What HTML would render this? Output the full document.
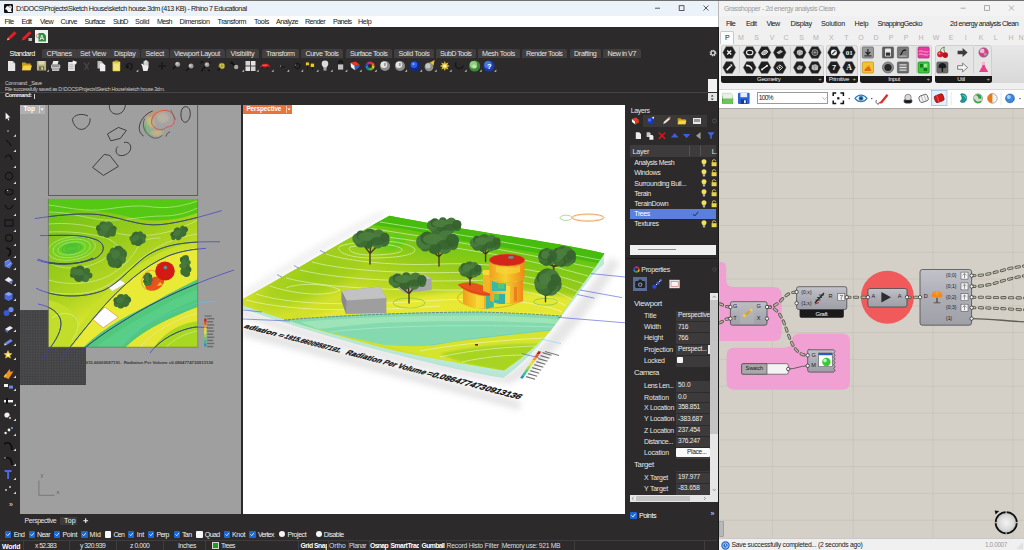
<!DOCTYPE html>
<html><head><meta charset="utf-8"><title>Rhino + Grasshopper</title>
<style>
*{box-sizing:border-box;margin:0;padding:0}
html,body{width:1024px;height:550px;overflow:hidden;background:#2c2a2a;font-family:"Liberation Sans",sans-serif;font-size:7px;color:#e8e8e8}
.abs{position:absolute}
#root{position:relative;width:1024px;height:550px;overflow:hidden}
.t{position:absolute;white-space:pre;line-height:1}
svg{position:absolute;overflow:visible}

#rh{left:0;top:0;width:718px;height:550px;background:#2c2a2a}
.tab{position:absolute;top:49px;height:9px;background:#403e3e;border-radius:2px 2px 0 0}


</style></head><body><div id="root">
<!-- sec_rhtop -->
<div id="rh" class="abs">
<div class="abs" style="left:0px;top:0px;width:718px;height:16px;background:#ebf2f9;"></div>
<svg style="left:4px;top:3.5px" width="9" height="9" viewBox="0 0 9 9"><rect width="9" height="9" rx="1" fill="#111"/><path d="M1 5 L3 2 L5 2.5 L6 1 L8 3 L7 6 L8 8 L4 8 L3 6 Z" fill="#f4f4f4"/><circle cx="6" cy="3" r=".6" fill="#111"/></svg>
<div class="t" style="left:16px;top:4.60px;font-size:7.2px;color:#151515;font-weight:400;letter-spacing:-0.461px;">D:\DOCS\Projects\Sketch House\sketch house.3dm (413 KB) - Rhino 7 Educational</div>
<svg style="left:650px;top:0" width="66" height="16" viewBox="0 0 66 16" fill="none" stroke="#333" stroke-width=".8"><path d="M5 8.2h5"/><rect x="29.2" y="5.7" width="4.8" height="4.8"/><path d="M53.5 5.5l5 5m0-5l-5 5"/></svg>
<div class="abs" style="left:0px;top:16px;width:718px;height:11px;background:#ffffff;"></div>
<div class="t" style="left:4.5px;top:18.00px;font-size:7.2px;color:#151515;font-weight:400;letter-spacing:-0.576px;">File</div>
<div class="t" style="left:21.5px;top:18.00px;font-size:7.2px;color:#151515;font-weight:400;letter-spacing:-0.602px;">Edit</div>
<div class="t" style="left:40px;top:18.00px;font-size:7.2px;color:#151515;font-weight:400;letter-spacing:-0.619px;">View</div>
<div class="t" style="left:60.5px;top:18.00px;font-size:7.2px;color:#151515;font-weight:400;letter-spacing:-0.541px;">Curve</div>
<div class="t" style="left:84.5px;top:18.00px;font-size:7.2px;color:#151515;font-weight:400;letter-spacing:-0.616px;">Surface</div>
<div class="t" style="left:113px;top:18.00px;font-size:7.2px;color:#151515;font-weight:400;letter-spacing:-0.878px;">SubD</div>
<div class="t" style="left:135px;top:18.00px;font-size:7.2px;color:#151515;font-weight:400;letter-spacing:-0.402px;">Solid</div>
<div class="t" style="left:157px;top:18.00px;font-size:7.2px;color:#151515;font-weight:400;letter-spacing:-0.652px;">Mesh</div>
<div class="t" style="left:179.5px;top:18.00px;font-size:7.2px;color:#151515;font-weight:400;letter-spacing:-0.446px;">Dimension</div>
<div class="t" style="left:217.5px;top:18.00px;font-size:7.2px;color:#151515;font-weight:400;letter-spacing:-0.449px;">Transform</div>
<div class="t" style="left:254px;top:18.00px;font-size:7.2px;color:#151515;font-weight:400;letter-spacing:-0.362px;">Tools</div>
<div class="t" style="left:276px;top:18.00px;font-size:7.2px;color:#151515;font-weight:400;letter-spacing:-0.517px;">Analyze</div>
<div class="t" style="left:305px;top:18.00px;font-size:7.2px;color:#151515;font-weight:400;letter-spacing:-0.603px;">Render</div>
<div class="t" style="left:333px;top:18.00px;font-size:7.2px;color:#151515;font-weight:400;letter-spacing:-0.586px;">Panels</div>
<div class="t" style="left:358px;top:18.00px;font-size:7.2px;color:#151515;font-weight:400;letter-spacing:-0.327px;">Help</div>
<svg style="left:0;top:27px" width="60" height="20" viewBox="0 27 60 20">
<path d="M6.600 40.600 L7.600 37.800 L14.400 31.200 L16.600 33.200 L9.800 39.800 Z" fill="#e02028"/><path d="M7 40.3l1-2.3 1.4 1.3z" fill="#f0d0a0"/>
<path d="M21.600 40.600 L22.600 37.800 L29.400 31.200 L31.600 33.200 L24.800 39.800 Z" fill="#e02028"/><rect x="28.5" y="38" width="3.5" height="3" fill="#b8b8b8"/>
<rect x="35" y="30" width="13" height="13" fill="#eef3ee"/><path d="M38.5 33 h5 l2.5 2.5 v6 h-7.5z" fill="#2f8f3f"/><path d="M40 40l1.8-5 1.8 5m-3-1.6h2.4" stroke="#fff" stroke-width=".8" fill="none"/><circle cx="38" cy="36" r="1.8" fill="none" stroke="#c06070" stroke-width=".6"/>
</svg>
<div class="t" style="left:9.6px;top:50.00px;font-size:7.2px;color:#ffffff;font-weight:400;letter-spacing:-0.503px;">Standard</div>
<div class="tab" style="left:42.0px;width:34.5px"></div>
<div class="t" style="left:46.5px;top:50.00px;font-size:7.2px;color:#e2e2e2;font-weight:400;letter-spacing:-0.245px;">CPlanes</div>
<div class="tab" style="left:75.5px;width:35px"></div>
<div class="t" style="left:80px;top:50.00px;font-size:7.2px;color:#e2e2e2;font-weight:400;letter-spacing:-0.286px;">Set View</div>
<div class="tab" style="left:109.5px;width:30.5px"></div>
<div class="t" style="left:114px;top:50.00px;font-size:7.2px;color:#e2e2e2;font-weight:400;letter-spacing:-0.301px;">Display</div>
<div class="tab" style="left:141.0px;width:27.5px"></div>
<div class="t" style="left:145.5px;top:50.00px;font-size:7.2px;color:#e2e2e2;font-weight:400;letter-spacing:-0.252px;">Select</div>
<div class="tab" style="left:169.5px;width:55px"></div>
<div class="t" style="left:174px;top:50.00px;font-size:7.2px;color:#e2e2e2;font-weight:400;letter-spacing:-0.367px;">Viewport Layout</div>
<div class="tab" style="left:226.0px;width:33px"></div>
<div class="t" style="left:230.5px;top:50.00px;font-size:7.2px;color:#e2e2e2;font-weight:400;letter-spacing:-0.188px;">Visibility</div>
<div class="tab" style="left:261.5px;width:37.5px"></div>
<div class="t" style="left:266px;top:50.00px;font-size:7.2px;color:#e2e2e2;font-weight:400;letter-spacing:-0.449px;">Transform</div>
<div class="tab" style="left:301.0px;width:42px"></div>
<div class="t" style="left:305.5px;top:50.00px;font-size:7.2px;color:#e2e2e2;font-weight:400;letter-spacing:-0.444px;">Curve Tools</div>
<div class="tab" style="left:345.5px;width:46.5px"></div>
<div class="t" style="left:350px;top:50.00px;font-size:7.2px;color:#e2e2e2;font-weight:400;letter-spacing:-0.461px;">Surface Tools</div>
<div class="tab" style="left:394.0px;width:40px"></div>
<div class="t" style="left:398.5px;top:50.00px;font-size:7.2px;color:#e2e2e2;font-weight:400;letter-spacing:-0.335px;">Solid Tools</div>
<div class="tab" style="left:435.5px;width:40.5px"></div>
<div class="t" style="left:440px;top:50.00px;font-size:7.2px;color:#e2e2e2;font-weight:400;letter-spacing:-0.519px;">SubD Tools</div>
<div class="tab" style="left:477.5px;width:42px"></div>
<div class="t" style="left:482px;top:50.00px;font-size:7.2px;color:#e2e2e2;font-weight:400;letter-spacing:-0.329px;">Mesh Tools</div>
<div class="tab" style="left:521.5px;width:45.5px"></div>
<div class="t" style="left:526px;top:50.00px;font-size:7.2px;color:#e2e2e2;font-weight:400;letter-spacing:-0.483px;">Render Tools</div>
<div class="tab" style="left:569.5px;width:31.5px"></div>
<div class="t" style="left:574px;top:50.00px;font-size:7.2px;color:#e2e2e2;font-weight:400;letter-spacing:-0.339px;">Drafting</div>
<div class="tab" style="left:603.0px;width:37.5px"></div>
<div class="t" style="left:607.5px;top:50.00px;font-size:7.2px;color:#e2e2e2;font-weight:400;letter-spacing:-0.480px;">New in V7</div>
<svg style="left:709px;top:49px" width="8" height="8" viewBox="-4 -4 8 8"><circle r="2.6" fill="none" stroke="#d8d8d8" stroke-width="1.6" stroke-dasharray="1.1 0.95"/><circle r="2" fill="none" stroke="#d8d8d8" stroke-width="1.2"/></svg>
<svg style="left:0;top:0" width="717" height="80" viewBox="0 0 717 80"><g transform="translate(11.6,66)"><path d="M-3.6 -5 h4.6 l2.6 2.6 v7.4 h-7.2z" fill="#e6e6e6"/><path d="M1 -5 v2.6 h2.6z" fill="#bdbdbd"/></g><g transform="translate(26.6,66)"><path d="M-4.6 -3.6 h3.4 l1 1.2 h4.4 v6.6 h-8.8z" fill="#c89a18"/><path d="M-4.6 4.2 l1.6 -4.6 h8.4 l-1.6 4.6z" fill="#f4d44a"/></g><g transform="translate(41.5,66)"><rect x="-4.6" y="-5" width="9.2" height="9.6" rx=".6" fill="#b6b27a"/><rect x="-3" y="-5" width="6" height="3.6" fill="#d9d6b4"/><rect x="-2.6" y=".4" width="5.2" height="4.2" fill="#6d6a50"/><rect x="-.2" y="1.2" width="1.6" height="2.6" fill="#d9d6b4"/></g><path d="M46.7 5.8 l2.2 0 l0 -2.2z" fill="#c8c8c8" transform="translate(0,66)"/><g transform="translate(55.6,66)"><path d="M-2.4 -5 h5.4 l-1 3.4 h-5.4z" fill="#ececec"/><rect x="-4.6" y="-1.6" width="9.2" height="4.2" rx=".8" fill="#c9c9c9"/><rect x="-3.8" y="-.4" width="7.6" height=".9" fill="#555"/><rect x="-3.6" y="2.6" width="7.2" height="2.2" fill="#ededed"/><rect x="-3.6" y="3.5" width="7.2" height=".6" fill="#777"/></g><g transform="translate(72.3,66)"><path d="M-4.2 -4 h5 l1.8 1.8 v7.2 h-6.8z" fill="#e0e0e0"/><path d="M.6 -5.4 l4 1.2 -1 2.6 -3.6-1.4z" fill="#f4f4f4"/><path d="M-2.8 -1.2h3.6 M-2.8 .6h3.6 M-2.8 2.4h3.6" stroke="#9a9a9a" stroke-width=".6"/></g><g transform="translate(86.6,66)"><path d="M-2.6 -3.6 L2 3.6 M2.6 -3.6 L-2 3.6" stroke="#474549" stroke-width="1.3" fill="none"/></g><g transform="translate(101.3,66)"><path d="M-3.8 -5 h3.6 l1.8 1.8 v5.6 h-5.4z" fill="#bfbfbf"/><path d="M-1.4 -2.4 h3.6 l1.8 1.8 v5.8 h-5.4z" fill="#efefef"/></g><g transform="translate(116.4,66)"><rect x="-3.8" y="-4.4" width="7.6" height="9.6" rx=".7" fill="#e9d65a"/><rect x="-1.8" y="-5.4" width="3.6" height="2" rx=".5" fill="#caa820"/><rect x="-2.8" y="-2.2" width="5.6" height="6.4" fill="#f3e57c"/></g><g transform="translate(129.5,66)"><path d="M-3 1.4 a3 3 0 1 1 3 2" stroke="#19181a" stroke-width="1.6" fill="none"/><circle cx="-2" cy="1" r="1.4" fill="#121113"/></g><path d="M136.1 5.8 l2.2 0 l0 -2.2z" fill="#c8c8c8" transform="translate(0,66)"/><g transform="translate(145.8,66)"><path d="M-3.6 .2 l-1.1 -2.2 1-.6 1.5 1.7 v-3.9 h1.2 v-1 h1.3 v.4 h1.2 v.8 h1.2 v6.1 l-1.1 3.6 h-4.1z" fill="#ededed"/><path d="M-1 -3.6v3 M.4 -4.4v3.6 M1.8 -3.8v3.2" stroke="#8a8a8a" stroke-width=".45"/></g><g transform="translate(162,66)"><path d="M-4 0h8M0 -4v8" stroke="#1a191b" stroke-width="1.5"/></g><g transform="translate(176.6,66)"><circle cx="1" cy="-1.8" r="2.5" fill="#9d9d9d"/><circle cx="0.4" cy="-2.4000000000000004" r="1.25" fill="#c9c9c9"/><path d="M-0.8 0.0 l-3 3" stroke="#151416" stroke-width="1.5"/></g><g transform="translate(189.6,66)"><circle cx="1.4" cy="0" r="2.5" fill="#9d9d9d"/><circle cx="0.8" cy="-0.6000000000000001" r="1.25" fill="#c9c9c9"/><path d="M-0.4 1.8 l-3 3" stroke="#151416" stroke-width="1.5"/></g><g transform="translate(205.4,66)"><circle cx="1.6" cy="-1.3" r="2.4" fill="#9d9d9d"/><circle cx="1.0" cy="-1.9000000000000001" r="1.2" fill="#c9c9c9"/><path d="M-0.20000000000000007 0.5 l-3 3" stroke="#151416" stroke-width="1.5"/><path d="M-4.2 -4.4 l2 .2 M-4.2 -4.4 l.2 2 M-4.4 4.6 l2-.2 M4.6 -4.6 l-.2 1.8 M4.6 4.6l-2-.2" stroke="#121113" stroke-width="1.1"/></g><g transform="translate(221.8,66)"><circle r="3" fill="#d8cf4a"/><path d="M-3 0h6M0 -3v6" stroke="#8a8430" stroke-width=".7"/><circle r="3" fill="none" stroke="#6f6a2a" stroke-width=".5"/><path d="M-1.6 1.8 l-2.6 2.6" stroke="#151416" stroke-width="1.4"/></g><g transform="translate(235,66)"><circle cx="1.2" cy="1" r="2.2" fill="#a8a8a8"/><path d="M-3.6 -3.4 l3 2.6" stroke="#121113" stroke-width="1.6"/><circle cx="-3.4" cy="-3.2" r="1.3" fill="#121113"/></g><path d="M241.9 5.8 l2.2 0 l0 -2.2z" fill="#c8c8c8" transform="translate(0,66)"/><g transform="translate(250.5,66)"><rect x="-5" y="-5" width="4.6" height="4.6" fill="#d4d4d4"/><rect x=".4" y="-5" width="4.6" height="4.6" fill="#e2e2e2"/><rect x="-5" y=".4" width="4.6" height="4.6" fill="#e2e2e2"/><rect x=".4" y=".4" width="4.6" height="4.6" fill="#d4d4d4"/></g><path d="M256.5 5.8 l2.2 0 l0 -2.2z" fill="#c8c8c8" transform="translate(0,66)"/><g transform="translate(265,66)"><path d="M-5 1 l1.6-1.8 2-1.4 h4 l2 1.4 v2.2 h-9.6z" fill="#d8181c"/><path d="M-2.6 -1.2 h4.6 l.8 .8 h-6z" fill="#ff8c8c"/><circle cx="-2.6" cy="1.6" r="1" fill="#222"/><circle cx="2.6" cy="1.6" r="1" fill="#222"/></g><path d="M271.5 5.8 l2.2 0 l0 -2.2z" fill="#c8c8c8" transform="translate(0,66)"/><g transform="translate(283,66)"><circle cx="-2.4" cy="0" r=".6" fill="#bdbdbd"/><path d="M-2 1 l4 0" stroke="#1a191b" stroke-width="1.2"/></g><path d="M287.0 5.8 l2.2 0 l0 -2.2z" fill="#c8c8c8" transform="translate(0,66)"/><g transform="translate(297.5,66)"><circle r="2.6" fill="none" stroke="#19181a" stroke-width="1.3"/><circle cx="-2.2" cy="-1" r=".55" fill="#c8c8c8"/></g><path d="M301.0 5.8 l2.2 0 l0 -2.2z" fill="#c8c8c8" transform="translate(0,66)"/><g transform="translate(310.5,66)"><rect x="-4.6" y="-3.6" width="3" height="3" fill="#f0c91a"/><rect x=".2" y="-2.4" width="3.4" height="3.4" fill="#f0c91a"/><path d="M-3 -0.4 v4 M2 1v3" stroke="#19181a" stroke-width=".9"/></g><path d="M316.3 5.8 l2.2 0 l0 -2.2z" fill="#c8c8c8" transform="translate(0,66)"/><g transform="translate(325,66)"><path d="M0 -5.4 a3.3 3.3 0 0 1 3.3 3.3 c0 1.6 -1.4 2.2 -1.6 3.8 h-3.4 c-.2 -1.6 -1.6 -2.2 -1.6 -3.8 a3.3 3.3 0 0 1 3.3 -3.3z" fill="#dcdcdc"/><rect x="-1.5" y="2" width="3" height="2.6" fill="#a5a5a5"/></g><path d="M330.5 5.8 l2.2 0 l0 -2.2z" fill="#c8c8c8" transform="translate(0,66)"/><g transform="translate(340.6,66)"><path d="M-1.8 -1.6 v-1.6 a1.8 1.8 0 0 1 3.6 0 v1.6" fill="none" stroke="#121113" stroke-width="1.3"/><rect x="-2.6" y="-1.6" width="5.2" height="5.2" fill="#c2c2c2"/></g><path d="M345.1 5.8 l2.2 0 l0 -2.2z" fill="#c8c8c8" transform="translate(0,66)"/><g transform="translate(355,66)"><path d="M-4.4 -3.2 l5-1.4 4 3 -5 1.8z" fill="#e83a1e"/><path d="M-4.4 -3.2 l.4 4.4 4 3 -.4-4.2z" fill="#f4f4f4"/><path d="M-.4 .2 l5-1.8 -.2 2.6 -4.4 3.4z" fill="#2a62c8"/></g><path d="M359.5 5.8 l2.2 0 l0 -2.2z" fill="#c8c8c8" transform="translate(0,66)"/><g transform="translate(370,66)"><path d="M0 0 L4.60 0.00 A4.6 4.6 0 0 1 3.25 3.25Z" fill="#e8c020"/><path d="M0 0 L3.25 3.25 A4.6 4.6 0 0 1 -0.00 4.60Z" fill="#58b030"/><path d="M0 0 L-0.00 4.60 A4.6 4.6 0 0 1 -3.25 3.25Z" fill="#20a070"/><path d="M0 0 L-3.25 3.25 A4.6 4.6 0 0 1 -4.60 -0.00Z" fill="#2080c0"/><path d="M0 0 L-4.60 -0.00 A4.6 4.6 0 0 1 -3.25 -3.25Z" fill="#5040b0"/><path d="M0 0 L-3.25 -3.25 A4.6 4.6 0 0 1 0.00 -4.60Z" fill="#b030a0"/><path d="M0 0 L0.00 -4.60 A4.6 4.6 0 0 1 3.25 -3.25Z" fill="#e03030"/><path d="M0 0 L3.25 -3.25 A4.6 4.6 0 0 1 4.60 0.00Z" fill="#f07020"/><circle r="2" fill="#2c2a2a"/></g><path d="M374.5 5.8 l2.2 0 l0 -2.2z" fill="#c8c8c8" transform="translate(0,66)"/><g transform="translate(385,66)"><circle r="5" fill="#8d8d8d"/><circle cx="-1.1" cy="-1.3" r="3.30" fill="#e4e4e4"/><rect x="-.5" y="-3" width=".9" height="3" fill="#555"/></g><g transform="translate(400,66)"><circle r="5" fill="#8d8d8d"/><circle cx="-1.1" cy="-1.3" r="3.30" fill="#e4e4e4"/><rect x="-.5" y="-3" width=".9" height="3" fill="#555"/></g><path d="M404.9 5.8 l2.2 0 l0 -2.2z" fill="#c8c8c8" transform="translate(0,66)"/><g transform="translate(415,66)"><circle r="5" fill="#0c2a9a"/><circle cx="-1.1" cy="-1.3" r="3.30" fill="#2e5fe0"/><circle cx="-1.6" cy="-2" r=".9" fill="#a8c4ff"/></g><path d="M419.9 5.8 l2.2 0 l0 -2.2z" fill="#c8c8c8" transform="translate(0,66)"/><g transform="translate(429.6,66)"><circle cx="-.6" cy=".8" r="4.4" fill="#8f8f8f"/><circle cx="-1.6" cy="-.2" r="2.6" fill="#c4c4c4"/><path d="M.4 -3.6 l4.6 -2.4 -1 5.4z" fill="#f0c030"/></g><path d="M434.5 5.8 l2.2 0 l0 -2.2z" fill="#c8c8c8" transform="translate(0,66)"/><g transform="translate(444.8,66)"><path d="M0 -5 l1 2.4 h-2z" fill="#e8c83a" transform="rotate(0)"/><path d="M0 -5 l1 2.4 h-2z" fill="#e8c83a" transform="rotate(45)"/><path d="M0 -5 l1 2.4 h-2z" fill="#e8c83a" transform="rotate(90)"/><path d="M0 -5 l1 2.4 h-2z" fill="#e8c83a" transform="rotate(135)"/><path d="M0 -5 l1 2.4 h-2z" fill="#e8c83a" transform="rotate(180)"/><path d="M0 -5 l1 2.4 h-2z" fill="#e8c83a" transform="rotate(225)"/><path d="M0 -5 l1 2.4 h-2z" fill="#e8c83a" transform="rotate(270)"/><path d="M0 -5 l1 2.4 h-2z" fill="#e8c83a" transform="rotate(315)"/><circle r="2.8" fill="#e8c83a"/><circle r="1.5" fill="#fff6c0"/></g><path d="M449.5 5.8 l2.2 0 l0 -2.2z" fill="#c8c8c8" transform="translate(0,66)"/><g transform="translate(459.6,66)"><path d="M-4 -3.6 v3 a3 3 0 0 0 3 3 h1.4 a3 3 0 0 0 3 -3" fill="none" stroke="#19181c" stroke-width="1.5"/></g><path d="M464.5 5.8 l2.2 0 l0 -2.2z" fill="#c8c8c8" transform="translate(0,66)"/><g transform="translate(474.6,66)"><circle r="5.6" fill="#3f8a3a"/><circle cx="-1.1" cy="-1.3" r="3.70" fill="#8fce7a"/><path d="M-2.6 -.4 l2.4 -1.6 .6 1.6 2.2 .4 -1.6 2.4 -2.6 -.4z" fill="#d8f0c8" opacity=".7"/></g><path d="M479.5 5.8 l2.2 0 l0 -2.2z" fill="#c8c8c8" transform="translate(0,66)"/><g transform="translate(489,66)"><circle r="5.6" fill="#1a3aa8"/><circle cx="-1.1" cy="-1.3" r="3.70" fill="#4a74e6"/><text x="-1.9" y="2.6" font-size="7.6" font-weight="700" fill="#fff" font-family="Liberation Sans,sans-serif">?</text></g><path d="M494.1 5.8 l2.2 0 l0 -2.2z" fill="#c8c8c8" transform="translate(0,66)"/></svg>
<div class="t" style="left:5px;top:80.80px;font-size:5.2px;color:#cccccc;font-weight:400;letter-spacing:-0.344px;">Command: _Save</div>
<div class="t" style="left:5px;top:86.90px;font-size:5.2px;color:#cccccc;font-weight:400;letter-spacing:-0.302px;">File successfully saved as D:\DOCS\Projects\Sketch House\sketch house.3dm.</div>
<div class="abs" style="left:0px;top:92.3px;width:708px;height:0.7px;background:#454343;"></div>
<div class="t" style="left:5px;top:93.40px;font-size:5.8px;color:#f0f0f0;font-weight:700;letter-spacing:-0.474px;">Command:</div>
<div class="abs" style="left:33.6px;top:93.8px;width:0.6px;height:5.4px;background:#cfcfcf;"></div>
<div class="abs" style="left:708.2px;top:79px;width:9.3px;height:12.6px;background:#f2f2f2;"></div>
<div class="abs" style="left:708.2px;top:92.8px;width:9.3px;height:8px;background:#e4e4e4;"></div>
<svg style="left:708px;top:92.5px" width="8.5" height="9" viewBox="0 0 8.5 9"><path d="M2.8 3.6 L4.2 1.8 L5.6 3.6Z M2.8 5.4 L4.2 7.2 L5.6 5.4Z" fill="#333"/></svg>
</div>
<!-- sec_rhviews -->
<div class="abs" style="left:19.8px;top:104.5px;width:221px;height:409.5px;background:#9f9f9f;"></div>
<div class="abs" style="left:19.8px;top:310.4px;width:65.8px;height:74.4px;background-color:#3b3b3d;background-image:linear-gradient(#4a4a4c .4px,transparent .4px),linear-gradient(90deg,#4a4a4c .4px,transparent .4px);background-size:1.6px 1.6px"></div>
<div class="abs" style="left:19.8px;top:104.5px;width:25.4px;height:9.6px;background:#b0b0b0;"></div>
<div class="t" style="left:23.6px;top:106.10px;font-size:6.6px;color:#ffffff;font-weight:700;letter-spacing:-0.035px;">Top</div>
<div class="abs" style="left:38.6px;top:105.5px;width:0.5px;height:7.6px;background:#d8d8d8;"></div>
<svg style="left:40px;top:108px" width="4" height="3" viewBox="0 0 4 3"><path d="M.3 .4h3.4L2 2.6z" fill="#fff"/></svg>
<svg style="left:0;top:0" width="717" height="550" viewBox="0 0 717 550"><defs>
<clipPath id="cTop"><rect x="48.4" y="198.8" width="149.3" height="148.4"/></clipPath>
<clipPath id="cTopView"><rect x="19.8" y="104.5" width="221" height="409"/></clipPath>
<linearGradient id="gTop" x1="0" y1="0" x2=".55" y2="1"><stop offset="0" stop-color="#58c812"/><stop offset=".2" stop-color="#80c618"/><stop offset=".42" stop-color="#9acc1c"/><stop offset=".6" stop-color="#b4d622"/><stop offset=".72" stop-color="#d4e22c"/><stop offset=".82" stop-color="#e8e836"/></linearGradient>
<radialGradient id="gHill"><stop offset="0" stop-color="#4ccc24"/><stop offset=".55" stop-color="#74d020"/><stop offset="1" stop-color="#90ca1c" stop-opacity="0"/></radialGradient>
</defs><g clip-path="url(#cTopView)"><rect x="48.4" y="100" width="149.3" height="95.4" fill="none" stroke="#4c4c4c" stroke-width=".8"/><g fill="none" stroke="#3c383a" stroke-width=".95"><path d="M109.5 104.5 c-1 6 3 10 8 9.6 c5-.4 7.5-5 8-9.6"/><path d="M88 116 c-6-3-14-1.6-15.6 3.4 c1 6 5 10 9 10 c5 0 9.6-6 8.6-11"/><path d="M107.4 134 l11-6.6 l8 3 l-6 8 l-9.6 2.4z"/><path d="M124 142.6 c4-1.4 7.6 2 6.6 6.4 c-1 5-8 8-12 6 c-3-1.6-3.6-6-.6-8.6"/><path d="M92.6 167.4 l11.6-13 l5.6 1 l8.6 11 l-15 9z"/><path d="M186.6 106.8 c-4-1-6 4-5.6 9 c.4 5 3 7 5 6.4 c3-1 4.6-6 4.2-10 c-.2-3-1.6-5-3.6-5.4"/></g><defs><filter id="blT"><feGaussianBlur stdDeviation="1.2"/></filter></defs><g filter="url(#blT)" opacity=".55"><ellipse cx="147.500" cy="128" rx="4.500" ry="7" fill="#78c078" transform="rotate(-25 147.500 128)"/><ellipse cx="151" cy="122" rx="4" ry="6" fill="#e8d060" transform="rotate(-30 151 122)"/><ellipse cx="158" cy="114" rx="8" ry="3" fill="#e89050" transform="rotate(-25 158 114)"/><ellipse cx="163" cy="118" rx="6" ry="5" fill="#e8e098"/><ellipse cx="157" cy="133" rx="6" ry="3" fill="#e8c070"/></g><path d="M151.800 124 c-1.500-7 4-13 12-13.600 c6-.4 9.600 3 10.400 8 c.8 5-2 8-6 8.400 c-2 .2-3 1.400-5 2.400 c-4 1.400-9-.6-11.400-5.200z" fill="#a8a4a8" fill-opacity=".55" stroke="#d45040" stroke-width=".9"/><path d="M152.700 111 c-8 3-13.500 10-13.500 17.600 c0 3 2 6 4.500 7.400" fill="none" stroke="#3c383a" stroke-width=".9"/><path d="M144.500 118.800 c-3 7 0 16 9 19.200 c4 .8 7-1 9-2.800" fill="none" stroke="#4a4a58" stroke-width=".8"/><path d="M166 136.500 c.4-2.400 2-4 4-4.600" fill="none" stroke="#3c383a" stroke-width=".8"/><path d="M170.700 109.800 l4.900 9.800" fill="none" stroke="#5a4a4a" stroke-width=".6"/><path d="M145 126 c0 5 3 9 8 11" fill="none" stroke="#58985a" stroke-width=".7"/><path d="M148 117 c3-4 8-6 14-6" fill="none" stroke="#d89040" stroke-width=".6"/><g clip-path="url(#cTop)"><rect x="48.4" y="198.8" width="149.3" height="148.4" fill="url(#gTop)"/><path d="M48.4 198.8 h149.3 v14 c-20 8-45 10-66 5 c-30-8-55-10-83.300-4z" fill="#54c812"/><ellipse cx="72" cy="248" rx="30" ry="17" fill="url(#gHill)" transform="rotate(-8 72 248)"/><path d="M197.7 247 c-30 4-55 20-78 40 c-14 12-28 30-48 60.200 h20 c30-25 70-45 106-70z" fill="#e8ea36"/><path d="M197.7 243 c-34 2-62 22-84 42 c-16 14-30 36-50 62.200 h8 c22-28 36-48 50-60 c22-20 46-36 76-40z" fill="#c8e02a"/><path d="M48.400 300 c10 2 22 8 28 16 c6 10 0 22-10 31.200 h-18z" fill="#c2de2a"/><path d="M83.4 347.200 c22-22 50-34 72-46 c16-9 30-16 42.300-22 v28 c-16 6-34 14-48 22 c-10 6-18 12-24 18z" fill="#52c87c"/><path d="M96 347.200 c24-20 50-32 68-42 c12-7 24-12 33.700-16 v10 c-16 6-32 14-46 22 c-12 7-22 16-30 26z" fill="#5ad08a" opacity=".8"/><path d="M126 347.200 c6-6 14-12 24-18 c14-8 32-16 47.700-22 v40z" fill="#e6e634"/><path d="M154 347.200 c8-12 24-24 43.700-26 v26z" fill="#a8d822"/><path d="M48.4 205 c16 2 32 6 50 5 c20-2 36-6 54-3 c16 2 30-1 45.300-6" fill="none" stroke="#e4f4c4" stroke-width=".6" opacity=".85"/><path d="M48.4 212 c20 0 36 6 56 8 c20 1 40-4 58-4 c14 0 24-3 35.300-8" fill="none" stroke="#e4f4c4" stroke-width=".6" opacity=".85"/><path d="M48.4 224 c24-2 44 2 64 8 c20 6 44 4 62-2 c8-3 16-6 23.300-10" fill="none" stroke="#e4f4c4" stroke-width=".6" opacity=".85"/><path d="M48.4 232 c22-1 40 1 58 6 c10 4 14 10 16 18" fill="none" stroke="#e4f4c4" stroke-width=".6" opacity=".85"/><path d="M48.4 262 c8 6 24 8 40 4 c14-4 24-12 26-20" fill="none" stroke="#e4f4c4" stroke-width=".6" opacity=".85"/><path d="M48.4 280 c20 6 44 4 60-4 c14-8 24-18 30-30 c4-6 12-8 22-8" fill="none" stroke="#e4f4c4" stroke-width=".6" opacity=".85"/><path d="M48.4 292 c22 4 44 2 58-6 c14-8 30-26 50-38 c14-8 28-12 41.300-14" fill="none" stroke="#e4f4c4" stroke-width=".6" opacity=".85"/><path d="M52 318 c8-6 18-6 24 0 c4 6 2 14-4 22" fill="none" stroke="#e4f4c4" stroke-width=".6" opacity=".85"/><path d="M140 347 c14-16 36-28 57.700-34" fill="none" stroke="#e4f4c4" stroke-width=".6" opacity=".85"/><path d="M166 347 c8-8 20-14 31.700-16" fill="none" stroke="#e4f4c4" stroke-width=".6" opacity=".85"/><ellipse cx="71.6" cy="248.4" rx="24" ry="11.5" fill="none" stroke="#d8f4b8" stroke-width=".6" opacity=".75" transform="rotate(-9 71.6 248.4)"/><ellipse cx="71.6" cy="248.4" rx="19" ry="9" fill="none" stroke="#d8f4b8" stroke-width=".6" opacity=".75" transform="rotate(-9 71.6 248.4)"/><ellipse cx="71.6" cy="248.4" rx="14" ry="6.4" fill="none" stroke="#d8f4b8" stroke-width=".6" opacity=".75" transform="rotate(-9 71.6 248.4)"/><ellipse cx="71.6" cy="248.4" rx="9.6" ry="4.2" fill="none" stroke="#3a9a58" stroke-width=".6" opacity=".75" transform="rotate(-9 71.6 248.4)"/><ellipse cx="71.6" cy="248.4" rx="6" ry="2.4" fill="none" stroke="#3a9a58" stroke-width=".6" opacity=".75" transform="rotate(-9 71.6 248.4)"/></g><path d="M107.7 286.8 L120.6 280 L125.8 283.4 L112.2 291.3z" fill="#fbfbfb" stroke="#c8b070" stroke-width=".4"/><path d="M93 319.5 L104.8 307 L118.3 317.2 L103.2 327.8z" fill="#fdfdfd" stroke="#c87050" stroke-width=".5"/><g transform="rotate(10 106.4 229.5)"><ellipse cx="106.4" cy="229.5" rx="8.00" ry="5.92" fill="#3f6e35"/><circle cx="107.56" cy="233.64" r="4.00" fill="#3f6e35"/><circle cx="102.35" cy="232.11" r="4.88" fill="#447638"/><circle cx="98.90" cy="229.24" r="3.11" fill="#3a6732"/><circle cx="102.45" cy="226.08" r="4.00" fill="#3f6e35"/><circle cx="108.07" cy="226.14" r="4.88" fill="#447638"/><circle cx="113.33" cy="227.61" r="3.11" fill="#3a6732"/><circle cx="112.36" cy="231.52" r="4.00" fill="#3f6e35"/><ellipse cx="104.40" cy="228.02" rx="4.50" ry="3.33" fill="#4a7c40" opacity=".8"/></g><g transform="rotate(-20 138 238.5)"><ellipse cx="138" cy="238.5" rx="6.40" ry="5.28" fill="#3f6e35"/><circle cx="143.78" cy="238.50" r="2.77" fill="#3f6e35"/><circle cx="141.21" cy="241.43" r="3.56" fill="#447638"/><circle cx="137.00" cy="241.54" r="4.36" fill="#3a6732"/><circle cx="132.79" cy="240.40" r="2.77" fill="#3f6e35"/><circle cx="133.36" cy="236.87" r="3.56" fill="#447638"/><circle cx="137.00" cy="235.46" r="4.36" fill="#3a6732"/><circle cx="141.61" cy="235.07" r="2.77" fill="#3f6e35"/><ellipse cx="136.40" cy="237.18" rx="3.60" ry="2.97" fill="#4a7c40" opacity=".8"/></g><g transform="rotate(-35 179 233)"><ellipse cx="179" cy="233" rx="7.52" ry="4.32" fill="#3f6e35"/><circle cx="176.27" cy="235.32" r="3.56" fill="#3f6e35"/><circle cx="171.64" cy="233.87" r="2.27" fill="#447638"/><circle cx="173.39" cy="231.13" r="2.92" fill="#3a6732"/><circle cx="178.87" cy="230.45" r="3.56" fill="#3f6e35"/><circle cx="184.84" cy="230.71" r="2.27" fill="#447638"/><circle cx="185.92" cy="233.62" r="2.92" fill="#3a6732"/><circle cx="181.96" cy="235.27" r="3.56" fill="#3f6e35"/><ellipse cx="177.12" cy="231.92" rx="4.23" ry="2.43" fill="#4a7c40" opacity=".8"/></g><g transform="rotate(20 116.8 257)"><ellipse cx="116.8" cy="257" rx="7.20" ry="8.48" fill="#3f6e35"/><circle cx="112.80" cy="258.96" r="5.94" fill="#3f6e35"/><circle cx="111.72" cy="253.00" r="3.78" fill="#447638"/><circle cx="116.20" cy="250.33" r="4.86" fill="#3a6732"/><circle cx="119.79" cy="252.84" r="5.94" fill="#3f6e35"/><circle cx="122.74" cy="257.81" r="3.78" fill="#447638"/><circle cx="119.54" cy="262.67" r="4.86" fill="#3a6732"/><circle cx="115.42" cy="262.53" r="5.94" fill="#3f6e35"/><ellipse cx="115.00" cy="254.88" rx="4.05" ry="4.77" fill="#4a7c40" opacity=".8"/></g><g transform="rotate(10 81 274)"><ellipse cx="81" cy="274" rx="8.80" ry="5.92" fill="#3f6e35"/><circle cx="89.51" cy="274.00" r="3.11" fill="#3f6e35"/><circle cx="85.87" cy="277.29" r="4.00" fill="#447638"/><circle cx="79.42" cy="277.41" r="4.88" fill="#3a6732"/><circle cx="73.33" cy="276.13" r="3.11" fill="#3f6e35"/><circle cx="73.97" cy="272.18" r="4.00" fill="#447638"/><circle cx="79.42" cy="270.59" r="4.88" fill="#3a6732"/><circle cx="86.31" cy="270.16" r="3.11" fill="#3f6e35"/><ellipse cx="78.80" cy="272.52" rx="4.95" ry="3.33" fill="#4a7c40" opacity=".8"/></g><g transform="rotate(-5 185.3 266)"><ellipse cx="185.3" cy="266" rx="4.48" ry="8.32" fill="#3f6e35"/><circle cx="183.54" cy="271.55" r="3.70" fill="#3f6e35"/><circle cx="181.59" cy="265.52" r="2.35" fill="#447638"/><circle cx="183.46" cy="259.49" r="3.02" fill="#3a6732"/><circle cx="186.03" cy="258.85" r="3.70" fill="#3f6e35"/><circle cx="188.74" cy="262.74" r="2.35" fill="#447638"/><circle cx="188.08" cy="269.86" r="3.02" fill="#3a6732"/><circle cx="185.74" cy="273.34" r="3.70" fill="#3f6e35"/><ellipse cx="184.18" cy="263.92" rx="2.52" ry="4.68" fill="#4a7c40" opacity=".8"/></g><g transform="rotate(-20 122 301)"><ellipse cx="122" cy="301" rx="6.88" ry="5.12" fill="#3f6e35"/><circle cx="119.83" cy="303.75" r="4.22" fill="#3f6e35"/><circle cx="115.74" cy="302.03" r="2.69" fill="#447638"/><circle cx="117.37" cy="298.79" r="3.46" fill="#3a6732"/><circle cx="121.90" cy="297.98" r="4.22" fill="#3f6e35"/><circle cx="126.96" cy="298.29" r="2.69" fill="#447638"/><circle cx="127.71" cy="301.74" r="3.46" fill="#3a6732"/><circle cx="124.36" cy="303.70" r="4.22" fill="#3f6e35"/><ellipse cx="120.28" cy="299.72" rx="3.87" ry="2.88" fill="#4a7c40" opacity=".8"/></g><g transform="rotate(0 148 279.6)"><ellipse cx="148" cy="279.6" rx="3.68" ry="5.12" fill="#3f6e35"/><circle cx="149.41" cy="283.31" r="2.48" fill="#3f6e35"/><circle cx="147.30" cy="283.36" r="3.04" fill="#447638"/><circle cx="145.13" cy="281.25" r="1.93" fill="#3a6732"/><circle cx="145.77" cy="277.29" r="2.48" fill="#3f6e35"/><circle cx="147.74" cy="275.66" r="3.04" fill="#447638"/><circle cx="150.14" cy="276.13" r="1.93" fill="#3a6732"/><circle cx="150.60" cy="280.05" r="2.48" fill="#3f6e35"/><ellipse cx="147.08" cy="278.32" rx="2.07" ry="2.88" fill="#4a7c40" opacity=".8"/></g><ellipse cx="154.6" cy="283.6" rx="10" ry="6.4" fill="#e8501c" transform="rotate(-25 154.6 283.6)"/><ellipse cx="150" cy="280" rx="8" ry="10" fill="none" stroke="#e07030" stroke-width=".5" transform="rotate(25 150 280)"/><g transform="rotate(0 148 279.6)"><ellipse cx="148" cy="279.6" rx="3.52" ry="4.80" fill="#3f6e35"/><circle cx="149.35" cy="283.05" r="2.38" fill="#3f6e35"/><circle cx="147.33" cy="283.08" r="2.90" fill="#447638"/><circle cx="145.25" cy="281.14" r="1.85" fill="#3a6732"/><circle cx="145.87" cy="277.45" r="2.38" fill="#3f6e35"/><circle cx="147.75" cy="275.95" r="2.90" fill="#447638"/><circle cx="150.05" cy="276.37" r="1.85" fill="#3a6732"/><circle cx="150.49" cy="280.02" r="2.38" fill="#3f6e35"/><ellipse cx="147.12" cy="278.40" rx="1.98" ry="2.70" fill="#4a7c40" opacity=".8"/></g><ellipse cx="165" cy="271" rx="9.8" ry="9.6" fill="#d41a14"/><circle cx="165.4" cy="267.6" r="1.8" fill="#5a9a90"/><path d="M157 286 l3-4 3 3z" fill="#f0c020"/><path d="M34.8 218.600 c20-3 44-6 64-4 c24 3 40 12 62 10 c20-2 40-8 61-14" fill="none" stroke="#3b3fc8" stroke-width=".7"/><path d="M34.8 218.600 c20-3 44-6 64-4 c24 3 40 12 62 10 c20-2 40-8 61-14" fill="none" stroke="#2e4a50" stroke-width=".8" clip-path="url(#cTop)"/><path d="M40 235.600 c20 0 40-2 56 4 c12 5 8 16-4 20 c-14 5-40 6-54-.6" fill="none" stroke="#3b3fc8" stroke-width=".7"/><path d="M40 235.600 c20 0 40-2 56 4 c12 5 8 16-4 20 c-14 5-40 6-54-.6" fill="none" stroke="#2e4a50" stroke-width=".8" clip-path="url(#cTop)"/><path d="M37 260 c16 6 40 6 56-2" fill="none" stroke="#3b3fc8" stroke-width=".7"/><path d="M37 260 c16 6 40 6 56-2" fill="none" stroke="#2e4a50" stroke-width=".8" clip-path="url(#cTop)"/><path d="M36 288.200 c20 10 48 10 68 2 c16-8 26-22 42-34 c18-12 40-15 74-14.400" fill="none" stroke="#3b3fc8" stroke-width=".7"/><path d="M36 288.200 c20 10 48 10 68 2 c16-8 26-22 42-34 c18-12 40-15 74-14.400" fill="none" stroke="#2e4a50" stroke-width=".8" clip-path="url(#cTop)"/><path d="M38 304 c10 2 18 6 22 14 c3 8-1 18-10 30 l-8 12" fill="none" stroke="#3b3fc8" stroke-width=".7"/><path d="M38 304 c10 2 18 6 22 14 c3 8-1 18-10 30 l-8 12" fill="none" stroke="#2e4a50" stroke-width=".8" clip-path="url(#cTop)"/><path d="M60 360 c14-18 28-36 44-54 c18-20 40-40 64-50 c10-4 24-7 38-7.600" fill="none" stroke="#3b3fc8" stroke-width=".7"/><path d="M60 360 c14-18 28-36 44-54 c18-20 40-40 64-50 c10-4 24-7 38-7.600" fill="none" stroke="#2e4a50" stroke-width=".8" clip-path="url(#cTop)"/><path d="M68 364 c20-22 44-36 70-52 c30-17 60-30 96-42" fill="none" stroke="#3b3fc8" stroke-width=".7"/><path d="M68 364 c20-22 44-36 70-52 c30-17 60-30 96-42" fill="none" stroke="#2e4a50" stroke-width=".8" clip-path="url(#cTop)"/><path d="M150 353 c10-14 30-24 46-26 l12 .6" fill="none" stroke="#3b3fc8" stroke-width=".7"/><path d="M150 353 c10-14 30-24 46-26 l12 .6" fill="none" stroke="#2e4a50" stroke-width=".8" clip-path="url(#cTop)"/><path d="M121 343 c20-20 50-30 76-40 l18-1.600" fill="none" stroke="#58c8e8" stroke-width=".7" opacity=".8"/><path d="M48.4 198.800 v148.4 h149.3 v-148.4" fill="none" stroke="#555" stroke-width=".5"/><rect x="204.2" y="318.6" width="2.2" height="3.1" fill="#c81818"/><rect x="204.2" y="321.7" width="2.2" height="3.1" fill="#e85020"/><rect x="204.2" y="324.8" width="2.2" height="3.1" fill="#f09828"/><rect x="204.2" y="327.9" width="2.2" height="3.1" fill="#f0d830"/><rect x="204.2" y="331.0" width="2.2" height="3.1" fill="#d8e838"/><rect x="204.2" y="334.1" width="2.2" height="3.1" fill="#a0dc40"/><rect x="204.2" y="337.2" width="2.2" height="3.1" fill="#58cc70"/><rect x="204.2" y="340.3" width="2.2" height="3.1" fill="#38b8a0"/><rect x="204.2" y="343.4" width="2.2" height="3.1" fill="#2890c0"/><rect x="207.2" y="318.0" width="7" height="1.4" fill="#5a5a5a" opacity=".75"/><rect x="207.2" y="321.1" width="6" height="1.4" fill="#5a5a5a" opacity=".75"/><rect x="207.2" y="324.2" width="7" height="1.4" fill="#5a5a5a" opacity=".75"/><rect x="207.2" y="327.3" width="6" height="1.4" fill="#5a5a5a" opacity=".75"/><rect x="207.2" y="330.4" width="7" height="1.4" fill="#5a5a5a" opacity=".75"/><rect x="207.2" y="333.5" width="6" height="1.4" fill="#5a5a5a" opacity=".75"/><rect x="207.2" y="336.6" width="7" height="1.4" fill="#5a5a5a" opacity=".75"/><rect x="207.2" y="339.7" width="6" height="1.4" fill="#5a5a5a" opacity=".75"/><rect x="207.2" y="342.8" width="7" height="1.4" fill="#5a5a5a" opacity=".75"/><rect x="207.2" y="345.9" width="6" height="1.4" fill="#5a5a5a" opacity=".75"/><rect x="204.6" y="315.400" width="7" height="1.3" fill="#5a5a5a" opacity=".7"/><path d="M38.900 480.500 V495.300 H54.700" fill="none" stroke="#686868" stroke-width=".7"/></g></svg>
<div class="t" style="left:85.6px;top:361.00px;font-size:4.4px;color:#3a3a3a;font-weight:400;letter-spacing:-0.054px;font-weight:700;">915.66009587191.  Radiation Per Volume =0.0864774730913136</div>
<div class="t" style="left:40.6px;top:473.20px;font-size:5.6px;color:#5c5c5c;font-weight:400;letter-spacing:-0.280px;">y</div>
<div class="t" style="left:56.4px;top:489.90px;font-size:5.6px;color:#5c5c5c;font-weight:400;letter-spacing:-0.280px;">x</div>
<!-- sec_rhpersp -->
<div class="abs" style="left:243px;top:104.5px;width:382.2px;height:409.5px;background:#ffffff;"></div>
<div class="abs" style="left:243px;top:104.5px;width:48.6px;height:9.6px;background:#e8743c;"></div>
<div class="t" style="left:246.4px;top:106.20px;font-size:6.4px;color:#ffffff;font-weight:700;letter-spacing:-0.085px;">Perspective</div>
<div class="abs" style="left:285.6px;top:105.5px;width:0.5px;height:7.6px;background:#f8c8a8;"></div>
<svg style="left:286.800px;top:108px" width="4" height="3" viewBox="0 0 4 3"><path d="M.3 .4h3.400L2 2.600z" fill="#fff"/></svg>
<svg style="left:0;top:0" width="717" height="550" viewBox="0 0 717 550"><defs>
<clipPath id="cP"><rect x="243" y="104.500" width="382" height="408.500"/></clipPath>
<clipPath id="cTer"><path d="M236 302.500 C280 279 340 243 389.400 215.700 C450 228 545 240 604.500 253.400 C594 270 572 298 561 316 C552 330 546 336 541 340 C530 352 515 363 504 370.400 C460 363 420 357 382 347.500 C340 337 290 322 236 303 Z"/></clipPath>
<linearGradient id="gP" gradientUnits="userSpaceOnUse" x1="500" y1="230" x2="484" y2="321"><stop offset="0" stop-color="#4cc00e"/><stop offset=".25" stop-color="#74c814"/><stop offset=".5" stop-color="#98cc1a"/><stop offset=".75" stop-color="#b6d622"/><stop offset="1" stop-color="#d2e02a"/></linearGradient>
<radialGradient id="gPL"><stop offset="0" stop-color="#98cc1a"/><stop offset=".6" stop-color="#a4d01c" stop-opacity=".85"/><stop offset="1" stop-color="#b4d820" stop-opacity="0"/></radialGradient>
<filter id="bl3" x="-20%" y="-50%" width="140%" height="200%"><feGaussianBlur stdDeviation="3"/></filter>
<filter id="bl1"><feGaussianBlur stdDeviation=".8"/></filter><filter id="bl2" x="-10%" y="-30%" width="120%" height="160%"><feGaussianBlur stdDeviation="2.2"/></filter>
<linearGradient id="gOr" x1="0" x2="1"><stop offset="0" stop-color="#f0a020"/><stop offset=".45" stop-color="#f4d030"/><stop offset="1" stop-color="#f08818"/></linearGradient>
</defs><g clip-path="url(#cP)"><path d="M236 306 C300 330 420 362 504 376 C530 360 560 330 610 258 L620 262 C580 330 540 370 510 384 C420 372 300 340 236 314Z" fill="#c0c0c0" opacity=".4" filter="url(#bl3)"/><path d="M243 300 C290 272 340 240 389 214 L380 212 C330 236 280 268 243 292Z" fill="#d4d4d4" opacity=".35" filter="url(#bl3)"/><path d="M236 306 C300 330 420 364 503 378 C520 366 538 348 548 334 L592 276 L604 264 L604 253 L236 300Z" fill="#9fe0c8" opacity=".7"/><path d="M236 302.500 C280 279 340 243 389.400 215.700 C450 228 545 240 604.500 253.400 C594 270 572 298 561 316 C552 330 546 336 541 340 C530 352 515 363 504 370.400 C460 363 420 357 382 347.500 C340 337 290 322 236 303 Z" fill="url(#gP)"/><g clip-path="url(#cTer)"><path d="M389 215 C450 228 545 240 605 253 L598 263 C540 252 470 244 420 232 C400 228 384 226 372 225Z" fill="#46bc0c"/><ellipse cx="372" cy="244" rx="34" ry="10" fill="#5acc14" opacity=".8" transform="rotate(-6 372 244)" filter="url(#bl1)"/><ellipse cx="318" cy="272" rx="86" ry="30" fill="url(#gPL)" transform="rotate(-26 318 272)"/><path d="M296 320 C340 309 400 298 450 292 C500 288 545 292 578 298 L561 318 C480 312 380 313 296 320Z" fill="#eaea36" opacity=".9" filter="url(#bl2)"/><path d="M330 317 C400 310 480 309 561 314 L561 317 C480 311.500 400 312.500 330 317Z" fill="#ecec38"/><path d="M284 320 C310 318 330 316.500 342 315.500 C370 313.500 420 312 480 312 C520 313 545 315 562 316 L556 330 C540 331.500 520 333.500 504 335.600 C480 338.500 464 340 452 341.200 C440 344 430 346 422 346 C408 346.500 396 346 385 345 C350 338 310 328 284 320Z" fill="#84daae"/><path d="M300 322 C340 318 420 315 480 315.500 C520 316 545 318 560 319.500 L558 324 C520 321 440 320 380 323 C350 325 330 328 318 329Z" fill="#a4e6bc" opacity=".8"/><path d="M385 345 C396 346 408 346.500 422 346 C430 346 440 344 452 341.200 C464 340 480 338.500 504 335.600 C520 333.500 540 331.500 556 330 C540 346 520 360 504 371 C460 364 420 356 385 345Z" fill="#d6e42e"/><path d="M440 354 C470 346 510 343 542 344 C530 354 516 363 504 371 C478 367 458 362 440 354Z" fill="#a8d424" filter="url(#bl1)"/><path d="M380 222 C430 230 520 244 600 260" fill="none" stroke="#f4fce0" stroke-width=".6" opacity=".9"/><path d="M368 228 C420 236 510 250 594 268" fill="none" stroke="#f4fce0" stroke-width=".6" opacity=".9"/><path d="M356 235 C400 236 440 246 480 252 C520 258 560 268 588 276" fill="none" stroke="#f4fce0" stroke-width=".6" opacity=".9"/><path d="M340 246 C370 238 402 240 414 248 C420 254 400 258 372 258 C350 258 334 252 340 246" fill="none" stroke="#f4fce0" stroke-width=".6" opacity=".9"/><path d="M350 247 C372 242 396 244 402 249 C404 253 388 255 370 255 C356 255 346 251 350 247" fill="none" stroke="#f4fce0" stroke-width=".6" opacity=".9"/><path d="M326 254 C350 262 400 266 440 264 C500 262 550 272 584 284" fill="none" stroke="#f4fce0" stroke-width=".6" opacity=".9"/><path d="M312 262 C350 272 420 274 470 272 C520 272 556 282 578 292" fill="none" stroke="#f4fce0" stroke-width=".6" opacity=".9"/><path d="M300 270 C350 282 430 282 490 280 C530 280 556 290 572 300" fill="none" stroke="#f4fce0" stroke-width=".6" opacity=".9"/><path d="M286 278 C340 292 440 290 500 290 C530 290 552 298 566 306" fill="none" stroke="#f4fce0" stroke-width=".6" opacity=".9"/><path d="M270 286 C300 296 330 296 340 290 C330 284 300 282 286 288" fill="none" stroke="#f4fce0" stroke-width=".6" opacity=".9"/><path d="M256 294 C300 308 380 304 440 300 C500 298 540 302 562 312" fill="none" stroke="#f4fce0" stroke-width=".6" opacity=".9"/><path d="M246 300 C300 314 380 310 440 306" fill="none" stroke="#f4fce0" stroke-width=".6" opacity=".9"/><path d="M420 351 C450 345 500 340 546 338" fill="none" stroke="#f4fce0" stroke-width=".6" opacity=".9"/><path d="M440 357 C470 350 505 347 536 346" fill="none" stroke="#f4fce0" stroke-width=".6" opacity=".9"/><path d="M462 362 C484 357 506 355 524 355" fill="none" stroke="#f4fce0" stroke-width=".6" opacity=".9"/><path d="M330 332 C380 326 460 324 556 327" fill="none" stroke="#b8f0d8" stroke-width=".5"/><path d="M430 345.500 C470 338 524 333 556 330" fill="none" stroke="#58c0e0" stroke-width=".5"/></g><path d="M541 339 L561 343.600" fill="none" stroke="#78c8f0" stroke-width=".5"/><path d="M284 320 C330 316 420 312 480 312 C520 313 545 315 562 316" fill="none" stroke="#4a5a7a" stroke-width=".6" stroke-dasharray="3 1"/><path d="M558 317.300 L625 322.800" fill="none" stroke="#4a58d0" stroke-width=".6"/><path d="M591 273.600 L625 277" fill="none" stroke="#4a58d0" stroke-width=".6"/><path d="M580 290 L622 297.600" fill="none" stroke="#4a58d0" stroke-width=".6"/><path d="M577.300 294.500 L594.500 298.200" fill="none" stroke="#4a58d0" stroke-width=".6"/><path d="M243 310 L262 312" fill="none" stroke="#4a58d0" stroke-width=".6"/><path d="M243 319 L290 321" fill="none" stroke="#4a58d0" stroke-width=".6"/><path d="M521.600 353.500 L539 357.800" fill="none" stroke="#4a58d0" stroke-width=".6"/><path d="M320 250.500 l5 2.400" fill="none" stroke="#4a58d0" stroke-width=".6"/><path d="M294 265.500 l5 2.800" fill="none" stroke="#4a58d0" stroke-width=".6"/><path d="M277 274.500 l5 2.800" fill="none" stroke="#4a58d0" stroke-width=".6"/><path d="M398 278 L425 274.400 L431.600 278.600 V290 L405 293 L398 288.500Z" fill="#a6a6a6"/><path d="M398 278 L425 274.400 L431.600 278.600 L405 282.500Z" fill="#bebebe"/><path d="M341.600 291 L380 286.600 L386.400 298 V313 L346 314 L341.600 301Z" fill="#9e9e9e"/><path d="M341.600 291 L380 286.600 L386.400 298 L346.500 300.500Z" fill="#c2c2c2"/><path d="M341.600 291 L346.500 300.500 L346 314 L341.600 301Z" fill="#8a8a8a"/><ellipse cx="409" cy="303" rx="16" ry="5" fill="none" stroke="#58b040" stroke-width=".5"/><ellipse cx="545.5" cy="301.8" rx="12" ry="3.4" fill="none" stroke="#58b040" stroke-width=".5"/><ellipse cx="471" cy="285" rx="8" ry="2.2" fill="none" stroke="#58b040" stroke-width=".5"/><path d="M370 264 L370 253.4 L363.3 244.8 M370 253.4 L378.4 244.8 M370 254.4 L371.3 238.8" stroke="#50381e" stroke-width="1.400" fill="none" stroke-linecap="round"/><ellipse cx="371.3" cy="238.8" rx="14.5" ry="7.4" fill="#3f6e35"/><circle cx="383.2" cy="240.4" r="6.4" fill="#3f6e35"/><circle cx="377.5" cy="243.1" r="5.5" fill="#487a3c"/><circle cx="368.1" cy="244.2" r="4.6" fill="#38642f"/><circle cx="361.0" cy="241.2" r="6.4" fill="#3f6e35"/><circle cx="357.8" cy="238.6" r="5.5" fill="#487a3c"/><circle cx="360.9" cy="235.0" r="4.6" fill="#38642f"/><circle cx="369.7" cy="234.8" r="6.4" fill="#3f6e35"/><circle cx="378.7" cy="234.8" r="5.5" fill="#487a3c"/><circle cx="384.9" cy="237.2" r="4.6" fill="#38642f"/><ellipse cx="366.9" cy="236.5" rx="8.8" ry="4.6" fill="#4c8040" opacity=".85"/><ellipse cx="377.5" cy="241.1" rx="7.1" ry="4.1" fill="#34602c" opacity=".7"/><path d="M444 236 L444 232.9 L437.1 230.4 M444 232.9 L451.1 230.4 M444 233.2 L444.5 225.5" stroke="#50381e" stroke-width="1.400" fill="none" stroke-linecap="round"/><ellipse cx="444.5" cy="225.5" rx="13.5" ry="6.0" fill="#3f6e35"/><circle cx="457.1" cy="227.3" r="3.8" fill="#3f6e35"/><circle cx="450.2" cy="228.4" r="5.2" fill="#487a3c"/><circle cx="441.6" cy="229.3" r="4.5" fill="#38642f"/><circle cx="433.6" cy="228.2" r="3.8" fill="#3f6e35"/><circle cx="432.0" cy="225.3" r="5.2" fill="#487a3c"/><circle cx="434.9" cy="222.8" r="4.5" fill="#38642f"/><circle cx="442.8" cy="221.0" r="3.8" fill="#3f6e35"/><circle cx="451.3" cy="222.7" r="5.2" fill="#487a3c"/><circle cx="457.0" cy="224.4" r="4.5" fill="#38642f"/><ellipse cx="440.4" cy="223.6" rx="8.2" ry="3.8" fill="#4c8040" opacity=".85"/><ellipse cx="450.3" cy="227.4" rx="6.6" ry="3.4" fill="#34602c" opacity=".7"/><path d="M439 266 L439 256.7 L429.0 249.2 M439 256.7 L446.0 249.2 M439 257.6 L438.0 242.0" stroke="#50381e" stroke-width="1.400" fill="none" stroke-linecap="round"/><ellipse cx="438.0" cy="242.0" rx="16.4" ry="8.8" fill="#3f6e35"/><circle cx="452.6" cy="244.6" r="5.5" fill="#3f6e35"/><circle cx="444.5" cy="246.3" r="7.7" fill="#487a3c"/><circle cx="434.6" cy="247.6" r="6.6" fill="#38642f"/><circle cx="425.3" cy="246.0" r="5.5" fill="#3f6e35"/><circle cx="423.8" cy="241.8" r="7.7" fill="#487a3c"/><circle cx="427.0" cy="238.1" r="6.6" fill="#38642f"/><circle cx="436.0" cy="235.5" r="5.5" fill="#3f6e35"/><circle cx="445.7" cy="237.9" r="7.7" fill="#487a3c"/><circle cx="452.4" cy="240.3" r="6.6" fill="#38642f"/><ellipse cx="433.0" cy="239.2" rx="10.0" ry="5.5" fill="#4c8040" opacity=".85"/><ellipse cx="445.0" cy="244.8" rx="8.0" ry="5.0" fill="#34602c" opacity=".7"/><path d="M485.6 261.6 L485.6 254.2 L479.0 248.2 M485.6 254.2 L491.3 248.2 M485.6 254.9 L485.5 243.0" stroke="#50381e" stroke-width="1.400" fill="none" stroke-linecap="round"/><ellipse cx="485.5" cy="243.0" rx="11.9" ry="6.4" fill="#3f6e35"/><circle cx="495.0" cy="244.4" r="5.6" fill="#3f6e35"/><circle cx="490.5" cy="246.7" r="4.8" fill="#487a3c"/><circle cx="482.9" cy="247.7" r="4.0" fill="#38642f"/><circle cx="477.3" cy="245.1" r="5.6" fill="#3f6e35"/><circle cx="474.6" cy="242.8" r="4.8" fill="#487a3c"/><circle cx="477.1" cy="239.7" r="4.0" fill="#38642f"/><circle cx="484.2" cy="239.5" r="5.6" fill="#3f6e35"/><circle cx="491.4" cy="239.5" r="4.8" fill="#487a3c"/><circle cx="496.5" cy="241.6" r="4.0" fill="#38642f"/><ellipse cx="481.9" cy="241.0" rx="7.2" ry="4.0" fill="#4c8040" opacity=".85"/><ellipse cx="490.6" cy="245.0" rx="5.8" ry="3.6" fill="#34602c" opacity=".7"/><path d="M553.6 272 L553.6 266.9 L558.3 262.7 M553.6 266.9 L568.1 262.7 M553.6 267.3 L563.5 256.5" stroke="#50381e" stroke-width="1.400" fill="none" stroke-linecap="round"/><ellipse cx="563.5" cy="256.5" rx="9.4" ry="7.6" fill="#3f6e35"/><circle cx="569.5" cy="258.1" r="6.6" fill="#3f6e35"/><circle cx="566.8" cy="260.9" r="5.7" fill="#487a3c"/><circle cx="561.7" cy="262.1" r="4.8" fill="#38642f"/><circle cx="558.3" cy="259.0" r="6.6" fill="#3f6e35"/><circle cx="556.3" cy="256.2" r="5.7" fill="#487a3c"/><circle cx="557.7" cy="252.6" r="4.8" fill="#38642f"/><circle cx="562.7" cy="252.4" r="6.6" fill="#3f6e35"/><circle cx="567.4" cy="252.4" r="5.7" fill="#487a3c"/><circle cx="571.1" cy="254.8" r="4.8" fill="#38642f"/><ellipse cx="560.6" cy="254.1" rx="5.8" ry="4.8" fill="#4c8040" opacity=".85"/><ellipse cx="567.5" cy="258.9" rx="4.6" ry="4.3" fill="#34602c" opacity=".7"/><path d="M553.6 272 L553.6 266.6 L543.7 262.2 M553.6 266.6 L550.9 262.2 M553.6 267.1 L547.5 257.0" stroke="#50381e" stroke-width="1.400" fill="none" stroke-linecap="round"/><ellipse cx="547.5" cy="257.0" rx="7.0" ry="6.4" fill="#3f6e35"/><circle cx="552.0" cy="258.6" r="4.8" fill="#3f6e35"/><circle cx="550.0" cy="261.3" r="4.0" fill="#487a3c"/><circle cx="546.5" cy="260.4" r="5.6" fill="#38642f"/><circle cx="543.6" cy="259.5" r="4.8" fill="#3f6e35"/><circle cx="542.0" cy="256.8" r="4.0" fill="#487a3c"/><circle cx="544.4" cy="254.6" r="5.6" fill="#38642f"/><circle cx="546.9" cy="252.9" r="4.8" fill="#3f6e35"/><circle cx="550.5" cy="253.0" r="4.0" fill="#487a3c"/><circle cx="551.6" cy="256.0" r="5.6" fill="#38642f"/><ellipse cx="545.4" cy="255.0" rx="4.2" ry="4.0" fill="#4c8040" opacity=".85"/><ellipse cx="550.5" cy="259.0" rx="3.4" ry="3.6" fill="#34602c" opacity=".7"/><path d="M545.5 301.8 L545.5 295.7 L542.6 290.6 M545.5 295.7 L552.8 290.6 M545.5 296.2 L548.0 282.5" stroke="#50381e" stroke-width="1.400" fill="none" stroke-linecap="round"/><ellipse cx="548.0" cy="282.5" rx="9.8" ry="10.0" fill="#3f6e35"/><circle cx="553.0" cy="284.6" r="8.8" fill="#3f6e35"/><circle cx="550.9" cy="288.3" r="7.5" fill="#487a3c"/><circle cx="546.4" cy="289.8" r="6.2" fill="#38642f"/><circle cx="543.7" cy="285.8" r="8.8" fill="#3f6e35"/><circle cx="541.6" cy="282.2" r="7.5" fill="#487a3c"/><circle cx="542.6" cy="277.4" r="6.2" fill="#38642f"/><circle cx="547.3" cy="277.0" r="8.8" fill="#3f6e35"/><circle cx="551.5" cy="277.0" r="7.5" fill="#487a3c"/><circle cx="555.0" cy="280.3" r="6.2" fill="#38642f"/><ellipse cx="545.0" cy="279.4" rx="6.0" ry="6.2" fill="#4c8040" opacity=".85"/><ellipse cx="552.2" cy="285.6" rx="4.8" ry="5.6" fill="#34602c" opacity=".7"/><path d="M409 303 L409 293.8 L399.9 286.2 M409 293.8 L415.2 286.2 M409 294.6 L408.0 281.0" stroke="#50381e" stroke-width="1.400" fill="none" stroke-linecap="round"/><ellipse cx="408.0" cy="281.0" rx="14.8" ry="6.4" fill="#3f6e35"/><circle cx="421.8" cy="282.9" r="4.0" fill="#3f6e35"/><circle cx="414.3" cy="284.1" r="5.6" fill="#487a3c"/><circle cx="404.8" cy="285.1" r="4.8" fill="#38642f"/><circle cx="396.0" cy="283.9" r="4.0" fill="#3f6e35"/><circle cx="394.2" cy="280.8" r="5.6" fill="#487a3c"/><circle cx="397.5" cy="278.2" r="4.8" fill="#38642f"/><circle cx="406.2" cy="276.2" r="4.0" fill="#3f6e35"/><circle cx="415.5" cy="278.0" r="5.6" fill="#487a3c"/><circle cx="421.8" cy="279.8" r="4.8" fill="#38642f"/><ellipse cx="403.5" cy="279.0" rx="9.0" ry="4.0" fill="#4c8040" opacity=".85"/><ellipse cx="414.3" cy="283.0" rx="7.2" ry="3.6" fill="#34602c" opacity=".7"/><ellipse cx="489" cy="298" rx="31.500" ry="10" fill="none" stroke="#f08020" stroke-width=".6"/><path d="M463 289 C470 293 484 296 494 295 V307 C484 310.500 470 309 463 303Z" fill="url(#gOr)"/><path d="M476 296 h8 v12 h-8z" fill="#f8dc38" opacity=".8"/><path d="M486 296 h7 v11 l-7 2z" fill="#3cb8a0"/><path d="M458 284.500 C464 281 476 282 486 287 C492 290 495 293 494 295.500 C484 297 466 294 458 284.500Z" fill="#e8521c"/><path d="M458 284.500 C466 291 484 295 494 295.500" fill="none" stroke="#c83818" stroke-width=".6"/><path d="M483 270 h9 v24 l-9 -3z" fill="#f4b428"/><path d="M483 270 h9 v5 h-9z" fill="#f8d838"/><path d="M490 279 C498 283.500 516 283.500 523 279 V301 C516 305 498 305 490 301Z" fill="url(#gOr)"/><path d="M492 281 C496 283 502 283.500 506 283.500 V291 h-14z" fill="#3ab8a8"/><path d="M498 283 l6 .5 v5 h-6z" fill="#58c870"/><path d="M494 294 h11 v10 C500 304 497 303.500 494 302.500Z" fill="#34b0a8"/><path d="M494 294 h5 v6 h-5z" fill="#60c868"/><path d="M506 286 h4 v17 h-4z" fill="#f8e040" opacity=".8"/><path d="M514 287 l3 0 0 14 -3 .5z" fill="#e87018" opacity=".7"/><path d="M489.500 260 V277.500 C497 283.500 517 283.500 524.500 277.500 V260Z" fill="url(#gOr)"/><path d="M496 266 C502 268.500 514 268.500 520 266 V272 C514 274.500 502 274.500 496 272Z" fill="#f8d434" opacity=".7"/><ellipse cx="507" cy="260" rx="17.800" ry="6" fill="#d2261a"/><ellipse cx="507" cy="260" rx="17.800" ry="6" fill="none" stroke="#e86a20" stroke-width=".5"/><ellipse cx="511" cy="257.400" rx="2.800" ry="1.400" fill="#5a9a90"/><path d="M470 285 L470 279.2 L465.5 274.4 M470 279.2 L474.6 274.4 M470 279.7 L470.3 269.7" stroke="#50381e" stroke-width="1.400" fill="none" stroke-linecap="round"/><ellipse cx="470.3" cy="269.7" rx="8.8" ry="5.8" fill="#3f6e35"/><circle cx="476.6" cy="271.0" r="5.1" fill="#3f6e35"/><circle cx="473.7" cy="273.1" r="4.4" fill="#487a3c"/><circle cx="468.5" cy="274.0" r="3.7" fill="#38642f"/><circle cx="464.8" cy="271.6" r="5.1" fill="#3f6e35"/><circle cx="462.9" cy="269.5" r="4.4" fill="#487a3c"/><circle cx="464.5" cy="266.7" r="3.7" fill="#38642f"/><circle cx="469.5" cy="266.5" r="5.1" fill="#3f6e35"/><circle cx="474.3" cy="266.5" r="4.4" fill="#487a3c"/><circle cx="477.9" cy="268.4" r="3.7" fill="#38642f"/><ellipse cx="467.6" cy="267.9" rx="5.3" ry="3.7" fill="#4c8040" opacity=".85"/><ellipse cx="474.0" cy="271.5" rx="4.3" ry="3.3" fill="#34602c" opacity=".7"/><ellipse cx="588" cy="217.600" rx="16" ry="3.600" fill="none" stroke="#e87838" stroke-width=".7"/><ellipse cx="588" cy="217.600" rx="15" ry="2.800" fill="none" stroke="#e8c040" stroke-width=".4"/><ellipse cx="566" cy="217.800" rx="6" ry="2.600" fill="none" stroke="#88b868" stroke-width=".6"/><rect x="475" y="344" width="3" height="1.600" fill="#902010"/><path d="M538.5 351.0 l2.600 .8 l-2.050 3 l-2.600 -.8z" fill="#c81818"/><path d="M542.5 352.6 l9 2.600" stroke="#444" stroke-width="1.100" opacity=".75"/><path d="M536.5 354.0 l2.600 .8 l-2.050 3 l-2.600 -.8z" fill="#e85020"/><path d="M540.5 355.6 l9 2.600" stroke="#444" stroke-width="1.100" opacity=".75"/><path d="M534.4 357.0 l2.600 .8 l-2.050 3 l-2.600 -.8z" fill="#f09828"/><path d="M538.4 358.6 l9 2.600" stroke="#444" stroke-width="1.100" opacity=".75"/><path d="M532.4 360.0 l2.600 .8 l-2.050 3 l-2.600 -.8z" fill="#f0d830"/><path d="M536.4 361.6 l9 2.600" stroke="#444" stroke-width="1.100" opacity=".75"/><path d="M530.3 363.0 l2.600 .8 l-2.050 3 l-2.600 -.8z" fill="#d8e838"/><path d="M534.3 364.6 l9 2.600" stroke="#444" stroke-width="1.100" opacity=".75"/><path d="M528.2 366.0 l2.600 .8 l-2.050 3 l-2.600 -.8z" fill="#a0dc40"/><path d="M532.2 367.6 l9 2.600" stroke="#444" stroke-width="1.100" opacity=".75"/><path d="M526.2 369.0 l2.600 .8 l-2.050 3 l-2.600 -.8z" fill="#58cc70"/><path d="M530.2 370.6 l9 2.600" stroke="#444" stroke-width="1.100" opacity=".75"/><path d="M524.1 372.0 l2.600 .8 l-2.050 3 l-2.600 -.8z" fill="#38b8a0"/><path d="M528.1 373.6 l9 2.600" stroke="#444" stroke-width="1.100" opacity=".75"/><path d="M522.1 375.0 l2.600 .8 l-2.050 3 l-2.600 -.8z" fill="#2890c0"/><path d="M526.1 376.6 l9 2.600" stroke="#444" stroke-width="1.100" opacity=".75"/><path d="M545 351.500 l14 4" stroke="#444" stroke-width="1.100" opacity=".7"/><path d="M243 326 L520 401 L520 410 L243 336Z" fill="#c8c8c8" opacity=".5" filter="url(#bl3)"/><text xml:space="preserve" transform="translate(243.3,327.6) rotate(14.600) skewX(-32)" font-family="Liberation Sans,sans-serif" font-weight="700" font-size="6.4" fill="#101010" stroke="#101010" stroke-width=".25" textLength="40.1" lengthAdjust="spacingAndGlyphs">adiation =</text><text xml:space="preserve" transform="translate(283.6,338.1) rotate(14.600) skewX(-32)" font-family="Liberation Sans,sans-serif" font-weight="700" font-size="6.6" fill="#101010" stroke="#101010" stroke-width=".25" textLength="57.8" lengthAdjust="spacingAndGlyphs">1915.66009587191.</text><text xml:space="preserve" transform="translate(344.7,354.0) rotate(14.600) skewX(-32)" font-family="Liberation Sans,sans-serif" font-weight="700" font-size="7.2" fill="#101010" stroke="#101010" stroke-width=".25" textLength="81.9" lengthAdjust="spacingAndGlyphs">Radiation Per Volume</text><text xml:space="preserve" transform="translate(425.4,375.0) rotate(14.600) skewX(-32)" font-family="Liberation Sans,sans-serif" font-weight="700" font-size="7.8" fill="#101010" stroke="#101010" stroke-width=".25" textLength="96.7" lengthAdjust="spacingAndGlyphs">=0.0864774730913136</text></g></svg>
<!-- sec_rhpanel -->
<div class="t" style="left:630.7px;top:107.10px;font-size:7px;color:#e8e8e8;font-weight:400;letter-spacing:-0.335px;">Layers</div>
<div class="abs" style="left:643px;top:115px;width:64px;height:12.4px;background:#3a3838;"></div>
<svg style="left:0;top:0" width="717" height="550" viewBox="0 0 717 550">
<g transform="translate(635.400,121)"><path d="M-3.600 -2 l4-1.400 3.400 2.400 -4 1.600z" fill="#e84020"/><path d="M-3.600 -2 l.2 3 3.400 2.600 -.2-3z" fill="#f4f4f4"/><path d="M-.2 .6 l4-1.600 -.2 2.400 -3.600 2.200z" fill="#d04020"/></g>
<g transform="translate(650.600,121)"><circle r="3.400" fill="#1c38b8"/><circle cx="-1" cy="-1" r="1.800" fill="#4a70e8"/><path d="M1 -3.600 l2.600-1 -.6 2.800z" fill="#e8e8e8"/></g>
<g transform="translate(666.500,121)"><path d="M-3.400 3 l1-2.400 4.600-4 1.600 1.400 -4.600 4z" fill="#e8e0d0"/><path d="M1.600-3.400 l1.800-1 1 1.200-1.200 1.200z" fill="#c88040"/></g>
<g transform="translate(681.700,121)"><path d="M-4 -2.800 h3 l.8 1 h4.200 v5 h-8z" fill="#c89a18"/><path d="M-4 3.200 l1.200-3.600 h7.600 l-1.200 3.600z" fill="#f4d44a"/></g>
<g transform="translate(697,121)"><rect x="-4" y="-3" width="8" height="6" fill="#e8e8e8"/><rect x="-3" y="-2" width="6" height="3" fill="#9a9a9a"/></g>
<circle cx="714.500" cy="121" r="1.900" fill="none" stroke="#4a4848" stroke-width="1.100"/>
<g transform="translate(638.400,135.700)"><path d="M-2.600 -3.400 h3.400 l1.800 1.800 v5 h-5.200z" fill="#ececec"/></g>
<g transform="translate(650,135.700)"><path d="M-3.400 -3.400 h3 l1 1 v3.600 h-4z" fill="#c8c8c8"/><path d="M-.6 -.6 h3 l1 1 v3.600 h-4z" fill="#f0f0f0"/></g>
<g transform="translate(662,135.700)"><path d="M-3.200 -3.200 L3.200 3.200 M3.200 -3.200 L-3.200 3.200" stroke="#d01818" stroke-width="1.700"/></g>
<g transform="translate(674.700,135.700)"><path d="M0 -2.600 L3.800 1.800 H-3.800z" fill="#3a5ee0"/></g>
<g transform="translate(686.600,135.700)"><path d="M0 2.600 L3.800 -1.800 H-3.800z" fill="#3a5ee0"/></g>
<g transform="translate(698.600,135.700)"><path d="M-2.600 0 L2 -3.600 V3.600z" fill="#9a9a9a"/></g>
<g transform="translate(711,135.700)"><path d="M-3.600 -3.400 h7.200 l-2.800 3.400 v3.600 l-1.600 -1 v-2.600z" fill="#3a6ad0"/></g>
</svg>
<div class="abs" style="left:629.8px;top:145px;width:86.7px;height:11.5px;background:#3d3b3b;"></div>
<div class="abs" style="left:689px;top:146px;width:0.6px;height:9.5px;background:#555353;"></div>
<div class="abs" style="left:699.7px;top:146px;width:0.6px;height:9.5px;background:#555353;"></div>
<div class="t" style="left:632.6px;top:147.70px;font-size:7px;color:#e4e4e4;font-weight:400;letter-spacing:-0.202px;">Layer</div>
<div class="t" style="left:711.7px;top:147.70px;font-size:7px;color:#e4e4e4;font-weight:400;letter-spacing:-0.419px;">L.</div>
<div class="t" style="left:634.3px;top:159.20px;font-size:7px;color:#e8e8e8;font-weight:400;letter-spacing:-0.395px;">Analysis Mesh</div>
<svg style="left:700.8px;top:158.7px" width="6" height="8" viewBox="-3 -4 6 8"><path d="M0 -3.800 a2.500 2.500 0 0 1 2.500 2.500 c0 1.200 -1 1.700 -1.200 2.700 h-2.600 c-.2 -1 -1.200 -1.500 -1.200 -2.700 a2.500 2.500 0 0 1 2.500 -2.500z" fill="#f0e060"/><rect x="-1.100" y="1.600" width="2.200" height="1.800" fill="#b8b8b8"/></svg>
<svg style="left:711px;top:158.7px" width="5" height="8" viewBox="-3 -4 5 8"><path d="M-1.600 -.6 v-1.200 a1.600 1.600 0 0 1 3.200 0" fill="none" stroke="#d8c040" stroke-width=".9"/><rect x="-2.400" y="-.8" width="5" height="4" fill="#e8d44a"/></svg>
<div class="t" style="left:634.3px;top:169.40px;font-size:7px;color:#e8e8e8;font-weight:400;letter-spacing:-0.342px;">Windows</div>
<svg style="left:700.8px;top:168.89999999999998px" width="6" height="8" viewBox="-3 -4 6 8"><path d="M0 -3.800 a2.500 2.500 0 0 1 2.500 2.500 c0 1.200 -1 1.700 -1.200 2.700 h-2.600 c-.2 -1 -1.200 -1.500 -1.200 -2.700 a2.500 2.500 0 0 1 2.500 -2.500z" fill="#f0e060"/><rect x="-1.100" y="1.600" width="2.200" height="1.800" fill="#b8b8b8"/></svg>
<svg style="left:711px;top:168.89999999999998px" width="5" height="8" viewBox="-3 -4 5 8"><path d="M-1.600 -.6 v-1.200 a1.600 1.600 0 0 1 3.200 0" fill="none" stroke="#d8c040" stroke-width=".9"/><rect x="-2.400" y="-.8" width="5" height="4" fill="#e8d44a"/></svg>
<div class="t" style="left:634.3px;top:179.60px;font-size:7px;color:#e8e8e8;font-weight:400;letter-spacing:-0.294px;">Surrounding Buil...</div>
<svg style="left:700.8px;top:179.1px" width="6" height="8" viewBox="-3 -4 6 8"><path d="M0 -3.800 a2.500 2.500 0 0 1 2.500 2.500 c0 1.200 -1 1.700 -1.200 2.700 h-2.600 c-.2 -1 -1.200 -1.500 -1.200 -2.700 a2.500 2.500 0 0 1 2.500 -2.500z" fill="#f0e060"/><rect x="-1.100" y="1.600" width="2.200" height="1.800" fill="#b8b8b8"/></svg>
<svg style="left:711px;top:179.1px" width="5" height="8" viewBox="-3 -4 5 8"><path d="M-1.600 -.6 v-1.200 a1.600 1.600 0 0 1 3.200 0" fill="none" stroke="#d8c040" stroke-width=".9"/><rect x="-2.400" y="-.8" width="5" height="4" fill="#e8d44a"/></svg>
<div class="t" style="left:634.3px;top:189.80px;font-size:7px;color:#e8e8e8;font-weight:400;letter-spacing:-0.428px;">Terain</div>
<svg style="left:700.8px;top:189.29999999999998px" width="6" height="8" viewBox="-3 -4 6 8"><path d="M0 -3.800 a2.500 2.500 0 0 1 2.500 2.500 c0 1.200 -1 1.700 -1.200 2.700 h-2.600 c-.2 -1 -1.200 -1.500 -1.200 -2.700 a2.500 2.500 0 0 1 2.500 -2.500z" fill="#f0e060"/><rect x="-1.100" y="1.600" width="2.200" height="1.800" fill="#b8b8b8"/></svg>
<svg style="left:711px;top:189.29999999999998px" width="5" height="8" viewBox="-3 -4 5 8"><path d="M-1.600 -.6 v-1.200 a1.600 1.600 0 0 1 3.200 0" fill="none" stroke="#d8c040" stroke-width=".9"/><rect x="-2.400" y="-.8" width="5" height="4" fill="#e8d44a"/></svg>
<div class="t" style="left:634.3px;top:200.00px;font-size:7px;color:#e8e8e8;font-weight:400;letter-spacing:-0.296px;">TerainDown</div>
<svg style="left:700.8px;top:199.5px" width="6" height="8" viewBox="-3 -4 6 8"><path d="M0 -3.800 a2.500 2.500 0 0 1 2.500 2.500 c0 1.200 -1 1.700 -1.200 2.700 h-2.600 c-.2 -1 -1.200 -1.500 -1.200 -2.700 a2.500 2.500 0 0 1 2.500 -2.500z" fill="#f0e060"/><rect x="-1.100" y="1.600" width="2.200" height="1.800" fill="#b8b8b8"/></svg>
<svg style="left:711px;top:199.5px" width="5" height="8" viewBox="-3 -4 5 8"><path d="M-1.600 -.6 v-1.200 a1.600 1.600 0 0 1 3.200 0" fill="none" stroke="#d8c040" stroke-width=".9"/><rect x="-2.400" y="-.8" width="5" height="4" fill="#e8d44a"/></svg>
<div class="abs" style="left:629.8px;top:208.6px;width:86.7px;height:10.2px;background:#5b7fdc;"></div>
<svg style="left:691.500px;top:210.7px" width="7" height="6" viewBox="0 0 7 6"><path d="M.8 3 l2 2 L6.200 .8" fill="none" stroke="#1a1a2a" stroke-width=".8"/></svg>
<div class="t" style="left:634.3px;top:210.20px;font-size:7px;color:#ffffff;font-weight:400;letter-spacing:-0.427px;">Trees</div>
<div class="t" style="left:634.3px;top:220.40px;font-size:7px;color:#e8e8e8;font-weight:400;letter-spacing:-0.244px;">Textures</div>
<svg style="left:700.8px;top:219.89999999999998px" width="6" height="8" viewBox="-3 -4 6 8"><path d="M0 -3.800 a2.500 2.500 0 0 1 2.500 2.500 c0 1.200 -1 1.700 -1.200 2.700 h-2.600 c-.2 -1 -1.200 -1.500 -1.200 -2.700 a2.500 2.500 0 0 1 2.500 -2.500z" fill="#f0e060"/><rect x="-1.100" y="1.600" width="2.200" height="1.800" fill="#b8b8b8"/></svg>
<svg style="left:711px;top:219.89999999999998px" width="5" height="8" viewBox="-3 -4 5 8"><path d="M-1.600 -.6 v-1.200 a1.600 1.600 0 0 1 3.200 0" fill="none" stroke="#d8c040" stroke-width=".9"/><rect x="-2.400" y="-.8" width="5" height="4" fill="#e8d44a"/></svg>
<div class="abs" style="left:629.8px;top:245.4px;width:86.7px;height:9.2px;background:#f0f0f0;"></div>
<div class="abs" style="left:638px;top:249.3px;width:37.6px;height:0.9px;background:#8a8a8a;"></div>
<div class="abs" style="left:626px;top:258px;width:91px;height:1.2px;background:#1c1b1b;"></div>
<svg style="left:632.500px;top:265.600px" width="7" height="7" viewBox="-3.500 -3.500 7 7"><path d="M0 0 L3.30 0.00 A3.300 3.300 0 0 1 1.65 2.86Z" fill="#e8c020"/><path d="M0 0 L1.65 2.86 A3.300 3.300 0 0 1 -1.65 2.86Z" fill="#40b040"/><path d="M0 0 L-1.65 2.86 A3.300 3.300 0 0 1 -3.30 -0.00Z" fill="#2090c0"/><path d="M0 0 L-3.30 -0.00 A3.300 3.300 0 0 1 -1.65 -2.86Z" fill="#5040b0"/><path d="M0 0 L-1.65 -2.86 A3.300 3.300 0 0 1 1.65 -2.86Z" fill="#c030a0"/><path d="M0 0 L1.65 -2.86 A3.300 3.300 0 0 1 3.30 0.00Z" fill="#e03030"/><circle r="1.500" fill="#2c2a2a"/></svg>
<div class="t" style="left:641.3px;top:265.70px;font-size:7px;color:#e8e8e8;font-weight:400;letter-spacing:-0.340px;">Properties</div>
<svg style="left:712px;top:267px" width="5" height="5" viewBox="-2.500 -2.500 5 5"><circle r="1.700" fill="none" stroke="#4a4848" stroke-width="1"/></svg>
<div class="abs" style="left:633px;top:277px;width:14.3px;height:13.6px;background:#5a6c94;"></div>
<svg style="left:0;top:0" width="717" height="550" viewBox="0 0 717 550">
<g transform="translate(640.200,284)"><rect x="-5" y="-3" width="10" height="7" rx="1" fill="#222"/><path d="M-2 -3 l1-1.600 h2 l1 1.600z" fill="#222"/><circle r="2.200" cy=".6" fill="#8898b8"/><circle r="1.200" cy=".6" fill="#222"/></g>
<g transform="translate(657,284)"><path d="M-4 4 L4 -4" stroke="#e8e8f8" stroke-width="1"/><circle cx="-2.600" cy="2.600" r="2.200" fill="#2848d8"/><circle cx="1" cy="-1" r="1.600" fill="#3a60e8"/><circle cx="3.600" cy="-3.600" r="1.100" fill="#6a90f8"/></g>
<g transform="translate(674.600,284)"><rect x="-5" y="-4" width="10" height="8" fill="#f4f4f4" stroke="#b8b8b8" stroke-width=".5"/><rect x="-3.600" y="-2.600" width="7.200" height="5.200" fill="none" stroke="#d06060" stroke-width=".6"/></g>
</svg>
<div class="abs" style="left:676px;top:310px;width:34.3px;height:185px;background:#3c3a3a;"></div>
<div class="t" style="left:634px;top:299.70px;font-size:7.8px;color:#e8e8e8;font-weight:400;letter-spacing:-0.276px;">Viewport</div>
<div class="abs" style="left:629.8px;top:310.09999999999997px;width:80px;height:0.5px;background:#2c2a2a;"></div>
<div class="t" style="left:644px;top:312.20px;font-size:7px;color:#e4e4e4;font-weight:400;letter-spacing:-0.093px;">Title</div>
<div class="t" style="left:678px;top:312.40px;font-size:6.6px;color:#ececec;font-weight:400;letter-spacing:-0.226px;">Perspective</div>
<div class="abs" style="left:629.8px;top:321.29999999999995px;width:80px;height:0.5px;background:#2c2a2a;"></div>
<div class="t" style="left:644px;top:323.40px;font-size:7px;color:#e4e4e4;font-weight:400;letter-spacing:-0.179px;">Width</div>
<div class="t" style="left:678px;top:323.60px;font-size:6.6px;color:#ececec;font-weight:400;letter-spacing:-0.337px;">716</div>
<div class="abs" style="left:629.8px;top:332.2px;width:80px;height:0.5px;background:#2c2a2a;"></div>
<div class="t" style="left:644px;top:334.30px;font-size:7px;color:#e4e4e4;font-weight:400;letter-spacing:-0.206px;">Height</div>
<div class="t" style="left:678px;top:334.50px;font-size:6.6px;color:#ececec;font-weight:400;letter-spacing:-0.337px;">766</div>
<div class="abs" style="left:629.8px;top:343.7px;width:80px;height:0.5px;background:#2c2a2a;"></div>
<div class="t" style="left:644px;top:345.80px;font-size:7px;color:#e4e4e4;font-weight:400;letter-spacing:-0.213px;">Projection</div>
<div class="t" style="left:678px;top:346.00px;font-size:6.6px;color:#ececec;font-weight:400;letter-spacing:-0.232px;">Perspect...</div>
<div class="abs" style="left:707.5px;top:344.5px;width:2.6px;height:9.6px;background:#e8e8e8;"></div>
<div class="abs" style="left:629.8px;top:354.59999999999997px;width:80px;height:0.5px;background:#2c2a2a;"></div>
<div class="t" style="left:644px;top:356.70px;font-size:7px;color:#e4e4e4;font-weight:400;letter-spacing:-0.345px;">Locked</div>
<div class="abs" style="left:677.4px;top:357.2px;width:6px;height:6px;background:#f4f4f4;border-radius:1px"></div>
<div class="abs" style="left:629.8px;top:367px;width:80px;height:13px;background:#2c2a2a;"></div>
<div class="t" style="left:634px;top:369.40px;font-size:7.8px;color:#e8e8e8;font-weight:400;letter-spacing:-0.457px;">Camera</div>
<div class="abs" style="left:629.8px;top:380.0px;width:80px;height:0.5px;background:#2c2a2a;"></div>
<div class="t" style="left:644px;top:382.10px;font-size:7px;color:#e4e4e4;font-weight:400;letter-spacing:-0.467px;">Lens Len...</div>
<div class="t" style="left:678px;top:382.30px;font-size:6.6px;color:#ececec;font-weight:400;letter-spacing:-0.086px;">50.0</div>
<div class="abs" style="left:629.8px;top:391.5px;width:80px;height:0.5px;background:#2c2a2a;"></div>
<div class="t" style="left:644px;top:393.60px;font-size:7px;color:#e4e4e4;font-weight:400;letter-spacing:-0.134px;">Rotation</div>
<div class="t" style="left:678px;top:393.80px;font-size:6.6px;color:#ececec;font-weight:400;letter-spacing:-0.225px;">0.0</div>
<div class="abs" style="left:629.8px;top:402.0px;width:80px;height:0.5px;background:#2c2a2a;"></div>
<div class="t" style="left:644px;top:404.10px;font-size:7px;color:#e4e4e4;font-weight:400;letter-spacing:-0.308px;">X Location</div>
<div class="t" style="left:678px;top:404.30px;font-size:6.6px;color:#ececec;font-weight:400;letter-spacing:-0.265px;">358.851</div>
<div class="abs" style="left:629.8px;top:413.29999999999995px;width:80px;height:0.5px;background:#2c2a2a;"></div>
<div class="t" style="left:644px;top:415.40px;font-size:7px;color:#e4e4e4;font-weight:400;letter-spacing:-0.295px;">Y Location</div>
<div class="t" style="left:678px;top:415.60px;font-size:6.6px;color:#ececec;font-weight:400;letter-spacing:-0.195px;">-383.687</div>
<div class="abs" style="left:629.8px;top:424.5px;width:80px;height:0.5px;background:#2c2a2a;"></div>
<div class="t" style="left:644px;top:426.60px;font-size:7px;color:#e4e4e4;font-weight:400;letter-spacing:-0.269px;">Z Location</div>
<div class="t" style="left:678px;top:426.80px;font-size:6.6px;color:#ececec;font-weight:400;letter-spacing:-0.265px;">237.454</div>
<div class="abs" style="left:629.8px;top:435.7px;width:80px;height:0.5px;background:#2c2a2a;"></div>
<div class="t" style="left:644px;top:437.80px;font-size:7px;color:#e4e4e4;font-weight:400;letter-spacing:-0.370px;">Distance...</div>
<div class="t" style="left:678px;top:438.00px;font-size:6.6px;color:#ececec;font-weight:400;letter-spacing:-0.265px;">376.247</div>
<div class="abs" style="left:629.8px;top:447.0px;width:80px;height:0.5px;background:#2c2a2a;"></div>
<div class="t" style="left:644px;top:449.10px;font-size:7px;color:#e4e4e4;font-weight:400;letter-spacing:-0.183px;">Location</div>
<div class="abs" style="left:676px;top:448.4px;width:34.4px;height:8.6px;background:#fafafa;border-radius:1px"></div>
<div class="t" style="left:687px;top:449.30px;font-size:6.6px;color:#1a1a1a;font-weight:400;letter-spacing:-0.314px;">Place...</div>
<div class="abs" style="left:629.8px;top:458.5px;width:80px;height:12.5px;background:#2c2a2a;"></div>
<div class="t" style="left:634px;top:460.80px;font-size:7.8px;color:#e8e8e8;font-weight:400;letter-spacing:-0.280px;">Target</div>
<div class="abs" style="left:629.8px;top:471.7px;width:80px;height:0.5px;background:#2c2a2a;"></div>
<div class="t" style="left:644px;top:473.80px;font-size:7px;color:#e4e4e4;font-weight:400;letter-spacing:-0.243px;">X Target</div>
<div class="t" style="left:678px;top:474.00px;font-size:6.6px;color:#ececec;font-weight:400;letter-spacing:-0.265px;">197.977</div>
<div class="abs" style="left:629.8px;top:482.9px;width:80px;height:0.5px;background:#2c2a2a;"></div>
<div class="t" style="left:644px;top:485.00px;font-size:7px;color:#e4e4e4;font-weight:400;letter-spacing:-0.227px;">Y Target</div>
<div class="t" style="left:678px;top:485.20px;font-size:6.6px;color:#ececec;font-weight:400;letter-spacing:-0.055px;">-83.658</div>
<div class="abs" style="left:710.3px;top:293px;width:7.5px;height:208.6px;background:#e6e6e6;"></div>
<div class="abs" style="left:710.3px;top:300px;width:7.5px;height:134px;background:#c4c4c4;"></div>
<svg style="left:710.800px;top:293px" width="6.600" height="200" viewBox="0 0 6.600 200"><path d="M1.800 4.600 l1.500-1.800 1.500 1.800" fill="none" stroke="#666" stroke-width=".6"/><path d="M1.800 196 l1.500 1.800 1.500-1.800" fill="none" stroke="#666" stroke-width=".6"/></svg>
<div class="abs" style="left:629.8px;top:495px;width:88px;height:6.6px;background:#e6e6e6;"></div>
<div class="abs" style="left:636px;top:496px;width:54px;height:4.6px;background:#c4c4c4;"></div>
<svg style="left:629.800px;top:494.800px" width="87" height="7" viewBox="0 0 87 7"><path d="M3.600 2 l-1.600 1.500 1.600 1.500" fill="none" stroke="#666" stroke-width=".6"/><path d="M74 2 l1.600 1.500 -1.600 1.500" fill="none" stroke="#666" stroke-width=".6"/></svg>
<div class="abs" style="left:630.1px;top:512px;width:6.8px;height:6.8px;background:#1a66d8;border-radius:1px"></div>
<svg style="left:630.100px;top:512px" width="6.800" height="6.800" viewBox="0 0 6 6"><path d="M1.200 3 l1.300 1.400 L4.800 1.600" fill="none" stroke="#fff" stroke-width=".8"/></svg>
<div class="t" style="left:638.9px;top:511.80px;font-size:7.2px;color:#ffffff;font-weight:400;letter-spacing:-0.469px;">Points</div>
<div class="t" style="left:710.6px;top:510.10px;font-size:7px;color:#e0e0e0;font-weight:400;letter-spacing:-0.389px;">»</div>
<!-- sec_rhbottom -->
<div class="t" style="left:24.6px;top:517.20px;font-size:7px;color:#e4e4e4;font-weight:400;letter-spacing:-0.452px;">Perspective</div>
<div class="abs" style="left:59.8px;top:516.6px;width:17.6px;height:8.4px;background:#3d3b3b;border-radius:1px"></div>
<div class="t" style="left:64.1px;top:517.20px;font-size:7px;color:#f0f0f0;font-weight:400;letter-spacing:0.071px;">Top</div>
<svg style="left:83px;top:518px" width="5.400" height="5.400" viewBox="0 0 5.400 5.400"><path d="M2.700 .3v4.800M.3 2.700h4.800" stroke="#f4f4f4" stroke-width="1.100"/></svg>
<div class="abs" style="left:4.9px;top:531.2px;width:6.4px;height:6.4px;background:#1768d6;border-radius:1px"></div><svg style="left:4.9px;top:531.2px" width="6.400" height="6.400" viewBox="0 0 6.400 6.400"><path d="M1.400 3.300 l1.400 1.400 L5 1.900" fill="none" stroke="#fff" stroke-width=".8"/></svg>
<div class="t" style="left:13.7px;top:530.90px;font-size:7px;color:#f0f0f0;font-weight:400;letter-spacing:-0.619px;">End</div>
<div class="abs" style="left:28.5px;top:531.2px;width:6.4px;height:6.4px;background:#1768d6;border-radius:1px"></div><svg style="left:28.5px;top:531.2px" width="6.400" height="6.400" viewBox="0 0 6.400 6.400"><path d="M1.400 3.300 l1.400 1.400 L5 1.900" fill="none" stroke="#fff" stroke-width=".8"/></svg>
<div class="t" style="left:36.9px;top:530.90px;font-size:7px;color:#f0f0f0;font-weight:400;letter-spacing:-0.518px;">Near</div>
<div class="abs" style="left:54.1px;top:531.2px;width:6.4px;height:6.4px;background:#1768d6;border-radius:1px"></div><svg style="left:54.1px;top:531.2px" width="6.400" height="6.400" viewBox="0 0 6.400 6.400"><path d="M1.400 3.300 l1.400 1.400 L5 1.900" fill="none" stroke="#fff" stroke-width=".8"/></svg>
<div class="t" style="left:62.4px;top:530.90px;font-size:7px;color:#f0f0f0;font-weight:400;letter-spacing:-0.211px;">Point</div>
<div class="abs" style="left:81.2px;top:531.2px;width:6.4px;height:6.4px;background:#1768d6;border-radius:1px"></div><svg style="left:81.2px;top:531.2px" width="6.400" height="6.400" viewBox="0 0 6.400 6.400"><path d="M1.400 3.300 l1.400 1.400 L5 1.900" fill="none" stroke="#fff" stroke-width=".8"/></svg>
<div class="t" style="left:89.6px;top:530.90px;font-size:7px;color:#f0f0f0;font-weight:400;letter-spacing:0.040px;">Mid</div>
<div class="abs" style="left:105.1px;top:531.2px;width:6.4px;height:6.4px;background:#f6f6f6;border-radius:1px"></div>
<div class="t" style="left:113.4px;top:530.90px;font-size:7px;color:#f0f0f0;font-weight:400;letter-spacing:-0.647px;">Cen</div>
<div class="abs" style="left:128px;top:531.2px;width:6.4px;height:6.4px;background:#1768d6;border-radius:1px"></div><svg style="left:128px;top:531.2px" width="6.400" height="6.400" viewBox="0 0 6.400 6.400"><path d="M1.400 3.300 l1.400 1.400 L5 1.900" fill="none" stroke="#fff" stroke-width=".8"/></svg>
<div class="t" style="left:136.7px;top:530.90px;font-size:7px;color:#f0f0f0;font-weight:400;letter-spacing:-0.128px;">Int</div>
<div class="abs" style="left:147.6px;top:531.2px;width:6.4px;height:6.4px;background:#1768d6;border-radius:1px"></div><svg style="left:147.6px;top:531.2px" width="6.400" height="6.400" viewBox="0 0 6.400 6.400"><path d="M1.400 3.300 l1.400 1.400 L5 1.900" fill="none" stroke="#fff" stroke-width=".8"/></svg>
<div class="t" style="left:156.4px;top:530.90px;font-size:7px;color:#f0f0f0;font-weight:400;letter-spacing:-0.622px;">Perp</div>
<div class="abs" style="left:173.5px;top:531.2px;width:6.4px;height:6.4px;background:#1768d6;border-radius:1px"></div><svg style="left:173.5px;top:531.2px" width="6.400" height="6.400" viewBox="0 0 6.400 6.400"><path d="M1.400 3.300 l1.400 1.400 L5 1.900" fill="none" stroke="#fff" stroke-width=".8"/></svg>
<div class="t" style="left:182px;top:530.90px;font-size:7px;color:#f0f0f0;font-weight:400;letter-spacing:-0.629px;">Tan</div>
<div class="abs" style="left:196.4px;top:531.2px;width:6.4px;height:6.4px;background:#f6f6f6;border-radius:1px"></div>
<div class="t" style="left:204.8px;top:530.90px;font-size:7px;color:#f0f0f0;font-weight:400;letter-spacing:-0.556px;">Quad</div>
<div class="abs" style="left:223.6px;top:531.2px;width:6.4px;height:6.4px;background:#1768d6;border-radius:1px"></div><svg style="left:223.6px;top:531.2px" width="6.400" height="6.400" viewBox="0 0 6.400 6.400"><path d="M1.400 3.300 l1.400 1.400 L5 1.900" fill="none" stroke="#fff" stroke-width=".8"/></svg>
<div class="t" style="left:232px;top:530.90px;font-size:7px;color:#f0f0f0;font-weight:400;letter-spacing:-0.300px;">Knot</div>
<div class="abs" style="left:249.4px;top:531.2px;width:6.4px;height:6.4px;background:#1768d6;border-radius:1px"></div><svg style="left:249.4px;top:531.2px" width="6.400" height="6.400" viewBox="0 0 6.400 6.400"><path d="M1.400 3.300 l1.400 1.400 L5 1.900" fill="none" stroke="#fff" stroke-width=".8"/></svg>
<div class="t" style="left:257.9px;top:530.90px;font-size:7px;color:#f0f0f0;font-weight:400;letter-spacing:-0.624px;">Vertex</div>
<div class="abs" style="left:279px;top:531.4000000000001px;width:6px;height:6px;background:#f6f6f6;border-radius:50%"></div>
<div class="t" style="left:287.4px;top:530.90px;font-size:7px;color:#f0f0f0;font-weight:400;letter-spacing:-0.427px;">Project</div>
<div class="abs" style="left:315.5px;top:531.4000000000001px;width:6px;height:6px;background:#f6f6f6;border-radius:50%"></div>
<div class="t" style="left:323.8px;top:530.90px;font-size:7px;color:#f0f0f0;font-weight:400;letter-spacing:-0.507px;">Disable</div>
<div class="abs" style="left:0px;top:540px;width:717px;height:0.6px;background:#3e3c3c;"></div>
<div class="abs" style="left:22.5px;top:541px;width:0.5px;height:9px;background:#3e3c3c;"></div>
<div class="abs" style="left:68.5px;top:541px;width:0.5px;height:9px;background:#3e3c3c;"></div>
<div class="abs" style="left:116px;top:541px;width:0.5px;height:9px;background:#3e3c3c;"></div>
<div class="abs" style="left:163.4px;top:541px;width:0.5px;height:9px;background:#3e3c3c;"></div>
<div class="abs" style="left:205px;top:541px;width:0.5px;height:9px;background:#3e3c3c;"></div>
<div class="abs" style="left:298px;top:541px;width:0.5px;height:9px;background:#3e3c3c;"></div>
<div class="abs" style="left:328px;top:541px;width:0.5px;height:9px;background:#3e3c3c;"></div>
<div class="abs" style="left:347.5px;top:541px;width:0.5px;height:9px;background:#3e3c3c;"></div>
<div class="abs" style="left:368.5px;top:541px;width:0.5px;height:9px;background:#3e3c3c;"></div>
<div class="abs" style="left:389.5px;top:541px;width:0.5px;height:9px;background:#3e3c3c;"></div>
<div class="abs" style="left:420px;top:541px;width:0.5px;height:9px;background:#3e3c3c;"></div>
<div class="abs" style="left:445.5px;top:541px;width:0.5px;height:9px;background:#3e3c3c;"></div>
<div class="abs" style="left:483.5px;top:541px;width:0.5px;height:9px;background:#3e3c3c;"></div>
<div class="abs" style="left:500.5px;top:541px;width:0.5px;height:9px;background:#3e3c3c;"></div>
<div class="abs" style="left:574px;top:541px;width:0.5px;height:9px;background:#3e3c3c;"></div>
<div class="abs" style="left:703.7px;top:541px;width:0.5px;height:9px;background:#3e3c3c;"></div>
<div class="t" style="left:2.1px;top:542.60px;font-size:7px;color:#ffffff;font-weight:700;letter-spacing:-0.320px;">World</div>
<div class="t" style="left:35.1px;top:542.70px;font-size:6.8px;color:#e4e4e4;font-weight:400;letter-spacing:-0.624px;">x 52.383</div>
<div class="t" style="left:80px;top:542.70px;font-size:6.8px;color:#e4e4e4;font-weight:400;letter-spacing:-0.497px;">y 320.939</div>
<div class="t" style="left:130px;top:542.70px;font-size:6.8px;color:#e4e4e4;font-weight:400;letter-spacing:-0.415px;">z 0.000</div>
<div class="t" style="left:177.9px;top:542.70px;font-size:6.8px;color:#e4e4e4;font-weight:400;letter-spacing:-0.323px;">Inches</div>
<div class="abs" style="left:212.2px;top:542.3px;width:6.7px;height:7px;background:#18a018;border:.6px solid #d8d8d8"></div>
<div class="t" style="left:221px;top:542.70px;font-size:6.8px;color:#e4e4e4;font-weight:400;letter-spacing:-0.686px;">Trees</div>
<div class="abs" style="left:300.400px;top:541.800px;width:27px;height:8.200px;overflow:hidden"><div class="t" style="left:0px;top:0.90px;font-size:6.8px;color:#ffffff;font-weight:700;letter-spacing:-0.444px;">Grid Snap</div></div>
<div class="t" style="left:329px;top:542.70px;font-size:6.8px;color:#dcdcdc;font-weight:400;letter-spacing:-0.061px;">Ortho</div>
<div class="t" style="left:348.9px;top:542.70px;font-size:6.8px;color:#dcdcdc;font-weight:400;letter-spacing:-0.393px;">Planar</div>
<div class="t" style="left:370px;top:542.70px;font-size:6.8px;color:#ffffff;font-weight:700;letter-spacing:-0.632px;">Osnap</div>
<div class="abs" style="left:390.400px;top:541.800px;width:29px;height:8.200px;overflow:hidden"><div class="t" style="left:0px;top:0.90px;font-size:6.8px;color:#ffffff;font-weight:700;letter-spacing:-0.455px;">SmartTrack</div></div>
<div class="t" style="left:421.6px;top:542.70px;font-size:6.8px;color:#ffffff;font-weight:700;letter-spacing:-0.643px;">Gumball</div>
<div class="abs" style="left:446.600px;top:541.800px;width:36.200px;height:8.200px;overflow:hidden"><div class="t" style="left:0px;top:0.90px;font-size:6.8px;color:#dcdcdc;font-weight:400;letter-spacing:-0.248px;">Record History</div></div>
<div class="t" style="left:484.8px;top:542.70px;font-size:6.8px;color:#dcdcdc;font-weight:400;letter-spacing:-0.169px;">Filter</div>
<div class="t" style="left:501.7px;top:542.70px;font-size:6.8px;color:#dcdcdc;font-weight:400;letter-spacing:-0.335px;">Memory use: 921 MB</div>
<svg style="left:0;top:0" width="20" height="520" viewBox="0 0 20 520"><path d="M5.600 112.600 l0 7 1.600-1.600 1.200 2.600 1-.4 -1.200-2.600 2.200-.2z" fill="#f4f4f4"/><path d="M16 136.8 l0 -2.600 l-2.600 2.600z" fill="#d8d8d8"/><path d="M16 152 l0 -2.600 l-2.600 2.600z" fill="#d8d8d8"/><path d="M16 168 l0 -2.600 l-2.600 2.600z" fill="#d8d8d8"/><path d="M16 184 l0 -2.600 l-2.600 2.600z" fill="#d8d8d8"/><path d="M16 200 l0 -2.600 l-2.600 2.600z" fill="#d8d8d8"/><path d="M16 216 l0 -2.600 l-2.600 2.600z" fill="#d8d8d8"/><path d="M16 232 l0 -2.600 l-2.600 2.600z" fill="#d8d8d8"/><path d="M16 246 l0 -2.600 l-2.600 2.600z" fill="#d8d8d8"/><path d="M16 258 l0 -2.600 l-2.600 2.600z" fill="#d8d8d8"/><path d="M16 270 l0 -2.600 l-2.600 2.600z" fill="#d8d8d8"/><path d="M16 286 l0 -2.600 l-2.600 2.600z" fill="#d8d8d8"/><path d="M16 301 l0 -2.600 l-2.600 2.600z" fill="#d8d8d8"/><path d="M16 316 l0 -2.600 l-2.600 2.600z" fill="#d8d8d8"/><path d="M16 332 l0 -2.600 l-2.600 2.600z" fill="#d8d8d8"/><path d="M16 346 l0 -2.600 l-2.600 2.600z" fill="#d8d8d8"/><path d="M16 360 l0 -2.600 l-2.600 2.600z" fill="#d8d8d8"/><path d="M16 378 l0 -2.600 l-2.600 2.600z" fill="#d8d8d8"/><path d="M16 391 l0 -2.600 l-2.600 2.600z" fill="#d8d8d8"/><path d="M16 406 l0 -2.600 l-2.600 2.600z" fill="#d8d8d8"/><path d="M16 421 l0 -2.600 l-2.600 2.600z" fill="#d8d8d8"/><path d="M16 436 l0 -2.600 l-2.600 2.600z" fill="#d8d8d8"/><path d="M16 451 l0 -2.600 l-2.600 2.600z" fill="#d8d8d8"/><path d="M16 466 l0 -2.600 l-2.600 2.600z" fill="#d8d8d8"/><path d="M16 480 l0 -2.600 l-2.600 2.600z" fill="#d8d8d8"/><path d="M16 494 l0 -2.600 l-2.600 2.600z" fill="#d8d8d8"/><circle cx="8" cy="131" r=".8" fill="#c8c8c8"/><path d="M6 140 c2 3 4 2 5 6" stroke="#161517" stroke-width="1.300" fill="none"/><path d="M5 158 c2-4 6-4 7 2" stroke="#161517" stroke-width="1.300" fill="none"/><circle cx="9" cy="176" r="3.600" stroke="#161517" stroke-width="1.300" fill="none"/><ellipse cx="9" cy="192" rx="4" ry="2.600" stroke="#161517" stroke-width="1.300" fill="none"/><circle cx="7.600" cy="190.400" r=".7" fill="#c8c8c8"/><path d="M5 205 q4 8 8 0" stroke="#161517" stroke-width="1.300" fill="none"/><rect x="5" y="220" width="8" height="6" stroke="#161517" stroke-width="1.300" fill="none"/><circle cx="9" cy="238" r="3.400" stroke="#161517" stroke-width="1.300" fill="none"/><path d="M6 248 c5 0 6 6 2 8" stroke="#0e0d0f" stroke-width="1.600" fill="none"/><path d="M4.600 262 l5-2.600 3 4 -3 5 -5-2z" fill="#5a78e0"/><path d="M4.600 262 l5-2.600 M7 266 l4-3" stroke="#c8d4ff" stroke-width=".6"/><path d="M4.600 280 l4-3 4 3 -1 4z" fill="#e8e8f0"/><path d="M8.600 282 l4-2 -1 4z" fill="#5a78e0"/><path d="M4.600 294 l4-2 4 2 v5 l-4 2 -4-2z" fill="#4a68d8"/><path d="M4.600 294 l4-2 4 2 -4 2z" fill="#8aa4f4"/><circle cx="6.600" cy="313" r="3" fill="#3a58d0"/><circle cx="11" cy="309.600" r="2.600" fill="#6a8af0"/><path d="M5 329 l5-3 3 2 -5 3z" fill="#e8e8f0"/><path d="M5 329 v2 l3 2 v-2z" fill="#4a68d8"/><path d="M4.600 343 l6-4 2 2 -6 4z" fill="#6a88e8"/><path d="M4.600 343 l2 2 -2.400 .6z" fill="#e8e8e8"/><path d="M8 350 l1.400 3 3 .4 -2.200 2 .6 3 -2.800-1.400 -2.800 1.400 .6-3 -2.200-2 3-.4z" fill="#f0d040"/><circle cx="8" cy="355" r="1.200" fill="#fff"/><path d="M3.600 377 l6-8 1 3 3-1 -5 8z" fill="#f09020"/><path d="M3.600 377 l3-1 -1-2z" fill="#f8e040"/><rect x="4" y="384" width="4" height="3" fill="#f0f0f0"/><rect x="9" y="385.600" width="4" height="3" fill="#6a88e8"/><rect x="4" y="400" width="9" height="2.400" fill="#f0f0f0"/><rect x="6" y="398" width="2" height="6" fill="#111"/><circle cx="7" cy="415" r="2.600" fill="#f0f0f0"/><circle cx="10" cy="418" r="2" fill="#333"/><circle cx="10" cy="418" r="1" fill="#c8c8c8"/><circle cx="5.600" cy="433" r="1.200" fill="#f0f0f0"/><circle cx="9" cy="430" r="1.400" fill="#f0f0f0"/><circle cx="12" cy="428" r="1" fill="#8aa4f4"/><path d="M4 444 c5-3 8 0 8 6" stroke="#0e0d0f" stroke-width="1.600" fill="none"/><path d="M4 459 c5-3 8 0 8 6" stroke="#0e0d0f" stroke-width="1.600" fill="none"/><circle cx="5" cy="458" r=".8" fill="#c8c8c8"/><path d="M4.600 471 h7 M8.100 471 v8" stroke="#4a68e0" stroke-width="2"/><circle cx="6" cy="490" r="1" fill="#c8c8c8"/><circle cx="10" cy="487" r="1" fill="#c8c8c8"/></svg>
<div class="t" style="left:9px;top:501.00px;font-size:7px;color:#e0e0e0;font-weight:400;letter-spacing:-0.389px;">»</div>
<!-- sec_gh -->
<div class="abs" style="left:718px;top:27px;width:1.3px;height:523px;background:#1a1919;"></div>
<div class="abs" style="left:719.2px;top:0px;width:304.79999999999995px;height:550px;background:#f0f0f0;"></div>
<div class="abs" style="left:718px;top:0px;width:1.3px;height:27px;background:#f0f0f0;"></div>
<div class="abs" style="left:718.3px;top:0px;width:0.9px;height:27px;background:#b8b8b8;"></div>
<div class="abs" style="left:719.2px;top:0px;width:304.79999999999995px;height:16px;background:#f3f3f3;"></div>
<div class="t" style="left:724px;top:4.90px;font-size:7px;color:#9a9a9a;font-weight:400;letter-spacing:-0.376px;">Grasshopper - 2d energy analysis Clean</div>
<svg style="left:955px;top:0" width="66" height="16" viewBox="0 0 66 16" fill="none" stroke="#9a9a9a" stroke-width=".8"><path d="M5.600 8.200h5"/><rect x="29.600" y="5.600" width="4.800" height="4.800"/><path d="M54 5.500l5 5m0-5l-5 5"/></svg>
<div class="t" style="left:726px;top:20.40px;font-size:7.2px;color:#151515;font-weight:400;letter-spacing:-0.576px;">File</div>
<div class="t" style="left:746px;top:20.40px;font-size:7.2px;color:#151515;font-weight:400;letter-spacing:-0.477px;">Edit</div>
<div class="t" style="left:766.6px;top:20.40px;font-size:7.2px;color:#151515;font-weight:400;letter-spacing:-0.619px;">View</div>
<div class="t" style="left:790.4px;top:20.40px;font-size:7.2px;color:#151515;font-weight:400;letter-spacing:-0.301px;">Display</div>
<div class="t" style="left:821px;top:20.40px;font-size:7.2px;color:#151515;font-weight:400;letter-spacing:-0.253px;">Solution</div>
<div class="t" style="left:854.6px;top:20.40px;font-size:7.2px;color:#151515;font-weight:400;letter-spacing:-0.327px;">Help</div>
<div class="t" style="left:877.6px;top:20.40px;font-size:7.2px;color:#151515;font-weight:400;letter-spacing:-0.526px;">SnappingGecko</div>
<div class="t" style="left:950px;top:20.40px;font-size:7.2px;color:#151515;font-weight:400;letter-spacing:-0.519px;">2d energy analysis Clean</div>
<div class="abs" style="left:720px;top:31px;width:13.6px;height:13px;background:#fbfbfb;border:.5px solid #c8c8c8;border-bottom:none;border-radius:2px 2px 0 0"></div>
<div class="t" style="left:725.065390625px;top:33.50px;font-size:7px;color:#222;font-weight:400;letter-spacing:-0.467px;">P</div>
<div class="t" style="left:738.0843359375px;top:33.50px;font-size:7px;color:#b4b4b4;font-weight:400;letter-spacing:-0.583px;">M</div>
<div class="t" style="left:754.265390625px;top:33.50px;font-size:7px;color:#b4b4b4;font-weight:400;letter-spacing:-0.467px;">S</div>
<div class="t" style="left:769.665390625px;top:33.50px;font-size:7px;color:#b4b4b4;font-weight:400;letter-spacing:-0.467px;">V</div>
<div class="t" style="left:783.47234375px;top:33.50px;font-size:7px;color:#b4b4b4;font-weight:400;letter-spacing:-0.506px;">C</div>
<div class="t" style="left:799.265390625px;top:33.50px;font-size:7px;color:#b4b4b4;font-weight:400;letter-spacing:-0.467px;">S</div>
<div class="t" style="left:813.0843359375px;top:33.50px;font-size:7px;color:#b4b4b4;font-weight:400;letter-spacing:-0.583px;">M</div>
<div class="t" style="left:829.065390625px;top:33.50px;font-size:7px;color:#b4b4b4;font-weight:400;letter-spacing:-0.467px;">X</div>
<div class="t" style="left:844.2619921875px;top:33.50px;font-size:7px;color:#b4b4b4;font-weight:400;letter-spacing:-0.428px;">T</div>
<div class="t" style="left:858.27765625px;top:33.50px;font-size:7px;color:#b4b4b4;font-weight:400;letter-spacing:-0.544px;">O</div>
<div class="t" style="left:873.47234375px;top:33.50px;font-size:7px;color:#b4b4b4;font-weight:400;letter-spacing:-0.506px;">D</div>
<div class="t" style="left:888.665390625px;top:33.50px;font-size:7px;color:#b4b4b4;font-weight:400;letter-spacing:-0.467px;">P</div>
<div class="t" style="left:903.665390625px;top:33.50px;font-size:7px;color:#b4b4b4;font-weight:400;letter-spacing:-0.467px;">P</div>
<div class="t" style="left:918.47234375px;top:33.50px;font-size:7px;color:#b4b4b4;font-weight:400;letter-spacing:-0.506px;">H</div>
<div class="t" style="left:932.6966015625px;top:33.50px;font-size:7px;color:#b4b4b4;font-weight:400;letter-spacing:-0.661px;">W</div>
<div class="t" style="left:948.665390625px;top:33.50px;font-size:7px;color:#b4b4b4;font-weight:400;letter-spacing:-0.467px;">E</div>
<div class="t" style="left:964.62765625px;top:33.50px;font-size:7px;color:#b4b4b4;font-weight:400;letter-spacing:-0.194px;">I</div>
<div class="t" style="left:978.665390625px;top:33.50px;font-size:7px;color:#b4b4b4;font-weight:400;letter-spacing:-0.467px;">K</div>
<div class="t" style="left:993.6533984375001px;top:33.50px;font-size:7px;color:#b4b4b4;font-weight:400;letter-spacing:-0.389px;">L</div>
<div class="t" style="left:1008.47234375px;top:33.50px;font-size:7px;color:#b4b4b4;font-weight:400;letter-spacing:-0.506px;">H</div>
<div class="t" style="left:1018.47234375px;top:33.50px;font-size:7px;color:#b4b4b4;font-weight:400;letter-spacing:-0.506px;">N</div>
<div class="abs" style="left:719.2px;top:43.5px;width:304.79999999999995px;height:41px;background:#f0f0f0;"></div>
<div class="abs" style="left:992px;top:44.700px;width:32px;height:38px;background:linear-gradient(#e8e8e8,#d8d8d8)"></div>
<div class="abs" style="left:721px;top:44.7px;width:102.70000000000005px;height:38.1px;background:#e5e5e5;border:.5px solid #cfcfcf;border-radius:2.500px"></div><div class="abs" style="left:721px;top:75.9px;width:102.70000000000005px;height:6.9px;background:#1b1b1b;border-radius:0 0 2.500px 2.500px"></div><div class="t" style="left:757.1097812500001px;top:76.40px;font-size:6px;color:#f0f0f0;font-weight:400;letter-spacing:-0.395px;">Geometry</div><div class="t" style="left:818.3000000000001px;top:76.40px;font-size:6px;color:#c0c0c0;font-weight:400;letter-spacing:-0.350px;">+</div>
<div class="abs" style="left:825.9px;top:44.7px;width:31.899999999999977px;height:38.1px;background:#e5e5e5;border:.5px solid #cfcfcf;border-radius:2.500px"></div><div class="abs" style="left:825.9px;top:75.9px;width:31.899999999999977px;height:6.9px;background:#1b1b1b;border-radius:0 0 2.500px 2.500px"></div><div class="t" style="left:828.6791062499999px;top:76.40px;font-size:6px;color:#f0f0f0;font-weight:400;letter-spacing:-0.307px;">Primitive</div><div class="t" style="left:852.4px;top:76.40px;font-size:6px;color:#c0c0c0;font-weight:400;letter-spacing:-0.350px;">+</div>
<div class="abs" style="left:860px;top:44.7px;width:72px;height:38.1px;background:#e5e5e5;border:.5px solid #cfcfcf;border-radius:2.500px"></div><div class="abs" style="left:860px;top:75.9px;width:72px;height:6.9px;background:#1b1b1b;border-radius:0 0 2.500px 2.500px"></div><div class="t" style="left:888.12826875px;top:76.40px;font-size:6px;color:#f0f0f0;font-weight:400;letter-spacing:-0.320px;">Input</div><div class="t" style="left:926.6px;top:76.40px;font-size:6px;color:#c0c0c0;font-weight:400;letter-spacing:-0.350px;">+</div>
<div class="abs" style="left:935px;top:44.7px;width:57px;height:38.1px;background:#e5e5e5;border:.5px solid #cfcfcf;border-radius:2.500px"></div><div class="abs" style="left:935px;top:75.9px;width:57px;height:6.9px;background:#1b1b1b;border-radius:0 0 2.500px 2.500px"></div><div class="t" style="left:957.18685px;top:76.40px;font-size:6px;color:#f0f0f0;font-weight:400;letter-spacing:-0.260px;">Util</div><div class="t" style="left:986.6px;top:76.40px;font-size:6px;color:#c0c0c0;font-weight:400;letter-spacing:-0.350px;">+</div>
<div class="abs" style="left:739.4px;top:47px;width:0.5px;height:26px;background:#cdcdcd;"></div>
<div class="abs" style="left:789.7px;top:47px;width:0.5px;height:26px;background:#cdcdcd;"></div>
<div class="abs" style="left:915.5px;top:47px;width:0.5px;height:26px;background:#cdcdcd;"></div>
<div class="abs" style="left:973px;top:47px;width:0.5px;height:26px;background:#cdcdcd;"></div>
<div class="abs" style="left:719.2px;top:88.8px;width:304.79999999999995px;height:20px;background:#ffffff;border-top:.5px solid #d8d8d8"></div>
<div class="abs" style="left:756.7px;top:92.4px;width:71.8px;height:11.8px;background:#ffffff;border:.6px solid #9a9a9a"></div>
<div class="t" style="left:758.8px;top:95.00px;font-size:6.8px;color:#222;font-weight:400;letter-spacing:-0.848px;">100%</div>
<svg style="left:821.500px;top:96.800px" width="5" height="3.400" viewBox="0 0 5 3.400"><path d="M.4 .4l2.100 2.200L4.600 .4" fill="none" stroke="#888" stroke-width=".6"/></svg>
<svg style="left:0;top:0" width="1024" height="110" viewBox="0 0 1024 110"><polygon points="735.50,52.50 732.35,58.30 726.05,58.30 722.90,52.50 726.05,46.70 732.35,46.70" fill="#1e1e1e"/><polygon points="735.50,52.50 732.35,58.30 726.05,58.30 722.90,52.50 726.05,46.70 732.35,46.70" fill="none" stroke="#4a4a4a" stroke-width=".5"/><g transform="translate(729.2,52.5)"><path d="M-2 -2l4 4m0-4l-4 4" stroke="#efefef" stroke-width="1.400"/></g><polygon points="756.00,52.50 752.85,58.30 746.55,58.30 743.40,52.50 746.55,46.70 752.85,46.70" fill="#1e1e1e"/><polygon points="756.00,52.50 752.85,58.30 746.55,58.30 743.40,52.50 746.55,46.70 752.85,46.70" fill="none" stroke="#4a4a4a" stroke-width=".5"/><g transform="translate(749.7,52.5)"><ellipse rx="3.200" ry="2.300" fill="none" stroke="#efefef" stroke-width="1.100"/></g><polygon points="770.90,52.50 767.75,58.30 761.45,58.30 758.30,52.50 761.45,46.70 767.75,46.70" fill="#1e1e1e"/><polygon points="770.90,52.50 767.75,58.30 761.45,58.30 758.30,52.50 761.45,46.70 767.75,46.70" fill="none" stroke="#4a4a4a" stroke-width=".5"/><g transform="translate(764.6,52.5)"><ellipse rx="3.200" ry="1.900" fill="#999" stroke="#efefef" stroke-width=".8" transform="rotate(-30)"/><path d="M-2 1l4-2.400" stroke="#efefef" stroke-width=".5"/></g><polygon points="786.00,52.50 782.85,58.30 776.55,58.30 773.40,52.50 776.55,46.70 782.85,46.70" fill="#1e1e1e"/><polygon points="786.00,52.50 782.85,58.30 776.55,58.30 773.40,52.50 776.55,46.70 782.85,46.70" fill="none" stroke="#4a4a4a" stroke-width=".5"/><g transform="translate(779.7,52.5)"><path d="M-3.200 0l4-2.400 2.400 1.600-4 2.600z" fill="#ddd"/><path d="M-2 .2l3.600-2M-1 1l3.600-2" stroke="#555" stroke-width=".4"/></g><polygon points="806.10,52.50 802.95,58.30 796.65,58.30 793.50,52.50 796.65,46.70 802.95,46.70" fill="#1e1e1e"/><polygon points="806.10,52.50 802.95,58.30 796.65,58.30 793.50,52.50 796.65,46.70 802.95,46.70" fill="none" stroke="#4a4a4a" stroke-width=".5"/><g transform="translate(799.8,52.5)"><path d="M-2.600 -1.400l2.600-1.200 2.600 1.200v3l-2.600 1.200-2.600-1.200z" fill="#aaa" stroke="#efefef" stroke-width=".5"/><path d="M-2.600 -1.400l2.600 1.200 2.600-1.200M0 -.2v3" stroke="#efefef" stroke-width=".4" fill="none"/></g><polygon points="821.20,52.50 818.05,58.30 811.75,58.30 808.60,52.50 811.75,46.70 818.05,46.70" fill="#1e1e1e"/><polygon points="821.20,52.50 818.05,58.30 811.75,58.30 808.60,52.50 811.75,46.70 818.05,46.70" fill="none" stroke="#4a4a4a" stroke-width=".5"/><g transform="translate(814.9,52.5)"><circle r="3" fill="none" stroke="#bbb" stroke-width=".7"/><path d="M-3 0h6M0-3v6M-2.100-2.100l4.200 4.200M2.100-2.100l-4.200 4.200" stroke="#bbb" stroke-width=".5"/></g><polygon points="840.20,52.50 837.05,58.30 830.75,58.30 827.60,52.50 830.75,46.70 837.05,46.70" fill="#1e1e1e"/><polygon points="840.20,52.50 837.05,58.30 830.75,58.30 827.60,52.50 830.75,46.70 837.05,46.70" fill="none" stroke="#4a4a4a" stroke-width=".5"/><g transform="translate(833.9,52.5)"><circle r="3" fill="#efefef"/><path d="M-1.600 1.600l3.200-3.200" stroke="#222" stroke-width="1.100"/></g><polygon points="855.30,52.50 852.15,58.30 845.85,58.30 842.70,52.50 845.85,46.70 852.15,46.70" fill="#1e1e1e"/><polygon points="855.30,52.50 852.15,58.30 845.85,58.30 842.70,52.50 845.85,46.70 852.15,46.70" fill="none" stroke="#4a4a4a" stroke-width=".5"/><g transform="translate(849,52.5)"><text x="-3.300" y="2.400" font-family="Liberation Serif,serif" font-weight="700" font-size="7" fill="#efefef">01</text></g><polygon points="735.50,67.50 732.35,73.30 726.05,73.30 722.90,67.50 726.05,61.70 732.35,61.70" fill="#1e1e1e"/><polygon points="735.50,67.50 732.35,73.30 726.05,73.30 722.90,67.50 726.05,61.70 732.35,61.70" fill="none" stroke="#4a4a4a" stroke-width=".5"/><g transform="translate(729.2,67.5)"><path d="M-2.600 2.600l4-4" stroke="#efefef" stroke-width="1.600"/><path d="M.6 -3l2.400 0 0 2.400z" fill="#efefef"/></g><polygon points="756.00,67.50 752.85,73.30 746.55,73.30 743.40,67.50 746.55,61.70 752.85,61.70" fill="#1e1e1e"/><polygon points="756.00,67.50 752.85,73.30 746.55,73.30 743.40,67.50 746.55,61.70 752.85,61.70" fill="none" stroke="#4a4a4a" stroke-width=".5"/><g transform="translate(749.7,67.5)"><path d="M-2.800 -2c2.400 0 4.600 1.600 5.200 4.200" stroke="#efefef" stroke-width="1.300" fill="none"/><circle cx="-2.800" cy="-2" r=".9" fill="#efefef"/></g><polygon points="770.90,67.50 767.75,73.30 761.45,73.30 758.30,67.50 761.45,61.70 767.75,61.70" fill="#1e1e1e"/><polygon points="770.90,67.50 767.75,73.30 761.45,73.30 758.30,67.50 761.45,61.70 767.75,61.70" fill="none" stroke="#4a4a4a" stroke-width=".5"/><g transform="translate(764.6,67.5)"><path d="M-2.600 2l5-3.800" stroke="#efefef" stroke-width="1.400"/><circle cx="-2.600" cy="2" r="1" fill="#efefef"/><circle cx="2.400" cy="-1.800" r="1" fill="#efefef"/></g><polygon points="786.00,67.50 782.85,73.30 776.55,73.30 773.40,67.50 776.55,61.70 782.85,61.70" fill="#1e1e1e"/><polygon points="786.00,67.50 782.85,73.30 776.55,73.30 773.40,67.50 776.55,61.70 782.85,61.70" fill="none" stroke="#4a4a4a" stroke-width=".5"/><g transform="translate(779.7,67.5)"><path d="M-3 .4l3-3 3 2.400-3 3z" fill="none" stroke="#efefef" stroke-width=".9"/><circle r=".9" fill="#efefef"/></g><polygon points="806.10,67.50 802.95,73.30 796.65,73.30 793.50,67.50 796.65,61.70 802.95,61.70" fill="#1e1e1e"/><polygon points="806.10,67.50 802.95,73.30 796.65,73.30 793.50,67.50 796.65,61.70 802.95,61.70" fill="none" stroke="#4a4a4a" stroke-width=".5"/><g transform="translate(799.8,67.5)"><path d="M-3.200 .6l2.600-2.800 3.800 1-1.400 3.200-3.600.6z" fill="#c8c8c8"/><path d="M-3.200 .6l6.400-1.800M-.6-2.200l.4 5" stroke="#777" stroke-width=".4"/></g><polygon points="821.20,67.50 818.05,73.30 811.75,73.30 808.60,67.50 811.75,61.70 818.05,61.70" fill="#1e1e1e"/><polygon points="821.20,67.50 818.05,73.30 811.75,73.30 808.60,67.50 811.75,61.70 818.05,61.70" fill="none" stroke="#4a4a4a" stroke-width=".5"/><g transform="translate(814.9,67.5)"><path d="M-3 -2.600l4-.6 2.400 1.600-.4 4-4 .6-2.400-1.600z" fill="#bbb"/><path d="M-3-2.600l2.400 1.600 4-.6M-.6-1v4" stroke="#777" stroke-width=".4" fill="none"/></g><polygon points="840.20,67.50 837.05,73.30 830.75,73.30 827.60,67.50 830.75,61.70 837.05,61.70" fill="#1e1e1e"/><polygon points="840.20,67.50 837.05,73.30 830.75,73.30 827.60,67.50 830.75,61.70 837.05,61.70" fill="none" stroke="#4a4a4a" stroke-width=".5"/><g transform="translate(833.9,67.5)"><text x="-2" y="2.700" font-family="Liberation Sans,sans-serif" font-weight="700" font-size="7.600" fill="#efefef">7</text></g><polygon points="855.30,67.50 852.15,73.30 845.85,73.30 842.70,67.50 845.85,61.70 852.15,61.70" fill="#1e1e1e"/><polygon points="855.30,67.50 852.15,73.30 845.85,73.30 842.70,67.50 845.85,61.70 852.15,61.70" fill="none" stroke="#4a4a4a" stroke-width=".5"/><g transform="translate(849,67.5)"><text x="-2.700" y="2.700" font-family="Liberation Serif,serif" font-weight="700" font-size="7.800" fill="#efefef">A</text></g><rect x="862.3" y="46.9" width="11.200" height="11.200" rx="1.200" fill="#9a9a9a" stroke="#555" stroke-width=".6"/><g transform="translate(867.9,52.5)"><path d="M0 -3.400v4.400M-2.400 -.6L0 2l2.400-2.600" stroke="#222" stroke-width="1.200" fill="none"/><path d="M-3.600 3.400h7.200" stroke="#222" stroke-width="1"/></g><rect x="862.3" y="61.9" width="11.200" height="11.200" rx="1.200" fill="#f2c230" stroke="#b08820" stroke-width=".6"/><g transform="translate(867.9,67.5)"><path d="M-3.600 3.400c1-4 2-1 2.600-5 .8 2 1.400 1 2-1 .6 2 1.400 3 2.600 6z" fill="#e06a18"/></g><rect x="882.4" y="46.9" width="11.200" height="11.200" rx="1.200" fill="#5a5a5a" stroke="#555" stroke-width=".6"/><g transform="translate(888,52.5)"><rect x="-3" y="-4" width="6" height="8" rx=".8" fill="#e8e8e8"/><rect x="-2.200" y="0" width="4.400" height="3.200" fill="#333"/></g><circle cx="888" cy="67.500" r="5.600" fill="#8a8a8a" stroke="#555" stroke-width=".6"/><circle cx="888" cy="67.500" r="3.600" fill="#262626"/><rect x="897.4" y="46.9" width="11.200" height="11.200" rx="1.200" fill="#7a7a7a" stroke="#555" stroke-width=".6"/><g transform="translate(903,52.5)"><path d="M-3 2.600c2 0 2-5 4-5h2" stroke="#111" stroke-width="1.100" fill="none"/><path d="M-3.600 3.600h7.200" stroke="#eee" stroke-width=".6"/></g><rect x="897.4" y="61.9" width="11.200" height="11.200" rx="1.200" fill="#6a6a6a" stroke="#555" stroke-width=".6"/><g transform="translate(903,67.5)"><path d="M-3.600 -2.600h7.200M-3.600 0h7.200M-3.600 2.600h7.200" stroke="#dcdcdc" stroke-width="1.300"/></g><rect x="918.0" y="46.9" width="11.200" height="11.200" rx="1.200" fill="#e83a9a" stroke="#a02070" stroke-width=".6"/><g transform="translate(923.6,52.5)"><path d="M-5 -1c3-2 7 2 10 0M-5 2c3-2 7 2 10 0" stroke="#ffb0dc" stroke-width=".9" fill="none"/></g><rect x="918.0" y="61.9" width="11.200" height="11.200" rx="1.200" fill="#3cc83c" stroke="#1a7a1a" stroke-width=".6"/><g transform="translate(923.6,67.5)"><rect x="-3.600" y="-3.600" width="3.600" height="3.600" fill="#1a7a1a"/><rect x="0" y="0" width="3.600" height="3.600" fill="#1a7a1a"/><rect x="0" y="-3.600" width="3.600" height="3.600" fill="#8af08a"/></g><g transform="translate(942.400,52.500)"><path d="M-2 -1c0-3 2-4 4-4.400M2.400 0c-1-2-1-4-.4-5.400" stroke="#3a7a2a" stroke-width=".8" fill="none"/><circle cx="-2.200" cy="1.800" r="3" fill="#d81828"/><circle cx="2.800" cy="2.600" r="2.800" fill="#c01020"/><circle cx="-3" cy="1" r=".9" fill="#ff9aa0"/></g><rect x="936.8" y="61.9" width="11.200" height="11.200" rx="1.200" fill="#6a6a6a" stroke="#555" stroke-width=".6"/><g transform="translate(942.4,67.5)"><path d="M0 4.400v-4" stroke="#111" stroke-width="1.300"/><path d="M-4 0c0-3 2-4.400 4-4.400s4 1.400 4 4.400c-2 1-6 1-8 0z" fill="#1a1a1a"/></g><g transform="translate(962.600,52.500)"><path d="M-5 -1.800h5v-2.600l5 4.400-5 4.400v-2.600h-5z" fill="#3c3c3c"/></g><g transform="translate(962.600,67.500)"><path d="M-5 -1.800h5v-2.600l5 4.400-5 4.400v-2.600h-5z" fill="#f4f4f4" stroke="#555" stroke-width=".7"/></g><g transform="translate(983.600,52.500)"><circle r="4.800" fill="#d83a8a"/><circle cx="-1.400" cy="-1.600" r="2.400" fill="#f4b8d8"/><circle r="4.800" fill="none" stroke="#888" stroke-width=".6"/><circle cx="1.600" cy="1.600" r="1.600" fill="#a0a0a0"/></g><g transform="translate(983.600,67.500)"><path d="M-1.200 -5h2.400v3.400l3.400 6.200h-9.200l3.400-6.200z" fill="#e8408a"/><path d="M-1.200 -5h2.400v2.400h-2.400z" fill="#f8c8e0"/></g><path d="M722 96.400h4l1 1.200h6v6.400h-11z" fill="#4aa83a"/><path d="M722.600 93.200h8.400l1.600 1.600v4h-10z" fill="#e8f0e8" stroke="#8ab88a" stroke-width=".4"/><path d="M722 104l1.600-5h10l-1.400 5z" fill="#6ac850"/><rect x="738" y="92.800" width="11.600" height="11.200" rx="1" fill="#2a62d8"/><rect x="740.400" y="92.800" width="6.800" height="4.400" fill="#e8eef8"/><rect x="740.800" y="99.400" width="6" height="4.600" fill="#1a3a98"/><rect x="744" y="100.200" width="1.800" height="3" fill="#e8eef8"/><path d="M833.200 96v-3h3M843.400 96v-3h-3M833.200 100.600v3h3M843.400 100.600v3h-3" fill="none" stroke="#111" stroke-width="1.500"/><rect x="837.200" y="97.200" width="2.200" height="2.200" fill="#111"/><circle cx="849.200" cy="98.600" r=".7" fill="#222"/><circle cx="871.800" cy="98.600" r=".7" fill="#222"/><circle cx="1020" cy="98.600" r=".7" fill="#222"/><path d="M855 98.400c3-4.400 9-4.400 12 0c-3 4.400-9 4.400-12 0z" fill="#f4f8fc" stroke="#2a7ab8" stroke-width="1.100"/><circle cx="861" cy="98.400" r="2.400" fill="#2a7ab8"/><circle cx="861" cy="98.400" r="1" fill="#0a2a48"/><path d="M878 103.600c1-2 2-1 3-2.600l5.600-7 1.800 1.400-5.600 7c-1.400 1.600-3 1-4.800 1.200z" fill="#d83030"/><path d="M876.600 100c-1.400 2 0 4.400 2.400 4" stroke="#333" stroke-width=".8" fill="none"/><g transform="translate(908,98.400)"><ellipse cy="2.600" rx="4.400" ry="2.600" fill="#3a3a3a"/><circle cy="-1" r="3.200" fill="#d8d8d8" stroke="#555" stroke-width=".6"/><ellipse cy="3" rx="3" ry="1.200" fill="#111"/></g><g transform="translate(923.600,98.400) rotate(-20)"><rect x="-4.400" y="-3.400" width="8.800" height="6.800" rx="2" fill="#f4f4f4" stroke="#555" stroke-width=".8"/><path d="M-1.400-3.400v6.800M1.600-3.400v6.800" stroke="#888" stroke-width=".5"/></g><rect x="931.400" y="90.400" width="15.600" height="15.200" fill="#e6f0fa" stroke="#78b0e0" stroke-width=".6"/><g transform="translate(939.200,98.200) rotate(-20)"><rect x="-4.600" y="-3.600" width="9.200" height="7.200" rx="2" fill="#d01818" stroke="#700808" stroke-width=".6"/><path d="M-1.400-3.600v7.200" stroke="#f06060" stroke-width=".8"/></g><path d="M951.200 92v13M1001 92v13" stroke="#d0d0d0" stroke-width=".5"/><g transform="translate(963.600,98.400)"><path d="M-3 -4.400c4-1 6 1 6 4s-2 5-5 4.400c-2-.4-1-2 0-3s0-3-1-5.400z" fill="#189898" stroke="#0a5858" stroke-width=".5"/><path d="M-1-3c2 0 3 1 3 3" stroke="#7ae0e0" stroke-width=".8" fill="none"/></g><g transform="translate(978,98.400)"><circle r="4.600" fill="#d8d8d8" stroke="#666" stroke-width=".5"/><path d="M-3 -3.400c4-2 7 0 6.400 4l-3-.6c0-2-1-2.600-3.400-3.400z" fill="#28a838"/><path d="M3 3c-3 2-6 1-6.600-2" stroke="#28a838" stroke-width="1.400" fill="none"/></g><g transform="translate(992.400,98.400)"><circle r="4.800" fill="#f4f4f4" stroke="#777" stroke-width=".6"/><path d="M0 -4.800a4.800 4.800 0 0 0 0 9.600z" fill="#e87818"/></g><g transform="translate(1010,98.400)"><circle r="4.400" fill="#3a88e0" stroke="#1a4888" stroke-width=".6"/><circle cx="-1.200" cy="-1.400" r="2" fill="#a8d0f8"/></g></svg>
<!-- sec_ghcanvas -->
<div class="abs" style="left:719.2px;top:109px;width:304.79999999999995px;height:428.6px;background:#d4d0c8;"></div>
<div class="abs" style="left:719.2px;top:108.4px;width:304.79999999999995px;height:0.8px;background:#a8a8a8;"></div>
<svg style="left:0;top:0" width="1024" height="550" viewBox="0 0 1024 550"><defs><clipPath id="cCan"><rect x="719.2" y="109" width="304.79999999999995" height="428.6"/></clipPath><linearGradient id="gComp" x1="0" y1="0" x2="0" y2="1"><stop offset="0" stop-color="#c2c2ca"/><stop offset=".5" stop-color="#adadb6"/><stop offset="1" stop-color="#9f9fa8"/></linearGradient><radialGradient id="gCompass"><stop offset="0" stop-color="#f4f4f4"/><stop offset=".7" stop-color="#d8d8d8"/><stop offset="1" stop-color="#b8b8b8"/></radialGradient></defs><g clip-path="url(#cCan)"><path d="M719.2 118.2H1024" stroke="#c2beb6" stroke-width=".6"/><path d="M719.2 145.0H1024" stroke="#c2beb6" stroke-width=".6"/><path d="M719.2 171.8H1024" stroke="#c2beb6" stroke-width=".6"/><path d="M719.2 198.6H1024" stroke="#c2beb6" stroke-width=".6"/><path d="M719.2 225.4H1024" stroke="#c2beb6" stroke-width=".6"/><path d="M719.2 252.2H1024" stroke="#c2beb6" stroke-width=".6"/><path d="M719.2 279.0H1024" stroke="#c2beb6" stroke-width=".6"/><path d="M719.2 305.8H1024" stroke="#c2beb6" stroke-width=".6"/><path d="M719.2 332.6H1024" stroke="#c2beb6" stroke-width=".6"/><path d="M719.2 359.4H1024" stroke="#c2beb6" stroke-width=".6"/><path d="M719.2 386.2H1024" stroke="#c2beb6" stroke-width=".6"/><path d="M719.2 413.0H1024" stroke="#c2beb6" stroke-width=".6"/><path d="M719.2 439.8H1024" stroke="#c2beb6" stroke-width=".6"/><path d="M719.2 466.6H1024" stroke="#c2beb6" stroke-width=".6"/><path d="M719.2 493.4H1024" stroke="#c2beb6" stroke-width=".6"/><path d="M719.2 520.2H1024" stroke="#c2beb6" stroke-width=".6"/><path d="M772.4 109V537.6" stroke="#c2beb6" stroke-width=".6"/><path d="M853.2 109V537.6" stroke="#c2beb6" stroke-width=".6"/><path d="M933 109V537.6" stroke="#c2beb6" stroke-width=".6"/><path d="M1013 109V537.6" stroke="#c2beb6" stroke-width=".6"/><path d="M719.2 262 h2 q5 0 5 6 v12 q0 7 7 7 h40 q8.500 0 8.500 8 v38 q0 8 -8 8 h-54.500z" fill="#f0a0d2"/><path d="M800 333.600 h42 q8 0 8 8 v40 q0 8.200 -8 8.200 h-107 q-8.500 0 -8.500 -8 v-26 q0 -8 8 -8 h49.500 q8 0 8 -7 q0 -7.200 8 -7.200z" fill="#f0a0d2"/><circle cx="887.400" cy="297.200" r="26.500" fill="#f05a5a"/><path d="M712 303 C724 303 722 307 730.400 307" fill="none" stroke="#55554c" stroke-width="3.1" stroke-dasharray="3.200 4.400" stroke-linecap="round"/><path d="M712 303 C724 303 722 307 730.400 307" fill="none" stroke="#bcb8a6" stroke-width="1.5" stroke-dasharray="3.200 4.400" stroke-linecap="round"/><path d="M712 324 C724 324 722 318.600 730.400 318.600" fill="none" stroke="#55554c" stroke-width="3.1" stroke-dasharray="3.200 4.400" stroke-linecap="round"/><path d="M712 324 C724 324 722 318.600 730.400 318.600" fill="none" stroke="#bcb8a6" stroke-width="1.5" stroke-dasharray="3.200 4.400" stroke-linecap="round"/><path d="M767 307 C782 307 782 292 796.600 292" fill="none" stroke="#55554c" stroke-width="3.1" stroke-dasharray="3.200 4.400" stroke-linecap="round"/><path d="M767 307 C782 307 782 292 796.600 292" fill="none" stroke="#bcb8a6" stroke-width="1.5" stroke-dasharray="3.200 4.400" stroke-linecap="round"/><path d="M767 307 C790 307 784 355.300 807.700 355.300" fill="none" stroke="#55554c" stroke-width="3.1" stroke-dasharray="3.200 4.400" stroke-linecap="round"/><path d="M767 307 C790 307 784 355.300 807.700 355.300" fill="none" stroke="#bcb8a6" stroke-width="1.5" stroke-dasharray="3.200 4.400" stroke-linecap="round"/><path d="M846.800 297.200 H867.900" fill="none" stroke="#55554c" stroke-width="3.1" stroke-dasharray="3.200 4.400" stroke-linecap="round"/><path d="M846.800 297.200 H867.900" fill="none" stroke="#bcb8a6" stroke-width="1.5" stroke-dasharray="3.200 4.400" stroke-linecap="round"/><path d="M907 297.200 H920" fill="none" stroke="#55554c" stroke-width="3.1" stroke-dasharray="3.200 4.400" stroke-linecap="round"/><path d="M907 297.200 H920" fill="none" stroke="#bcb8a6" stroke-width="1.5" stroke-dasharray="3.200 4.400" stroke-linecap="round"/><path d="M971.600 275.600 C995 275.600 1000 268 1030 265.500" fill="none" stroke="#55554c" stroke-width="3.1" stroke-dasharray="3.200 4.400" stroke-linecap="round"/><path d="M971.600 275.600 C995 275.600 1000 268 1030 265.500" fill="none" stroke="#bcb8a6" stroke-width="1.5" stroke-dasharray="3.200 4.400" stroke-linecap="round"/><path d="M971.600 286.400 C995 286.400 1000 279 1030 275" fill="none" stroke="#55554c" stroke-width="3.1" stroke-dasharray="3.200 4.400" stroke-linecap="round"/><path d="M971.600 286.400 C995 286.400 1000 279 1030 275" fill="none" stroke="#bcb8a6" stroke-width="1.5" stroke-dasharray="3.200 4.400" stroke-linecap="round"/><path d="M971.600 297.200 C990 297.200 1005 297.800 1030 298" fill="none" stroke="#55554c" stroke-width="3.1" stroke-dasharray="3.200 4.400" stroke-linecap="round"/><path d="M971.600 297.200 C990 297.200 1005 297.800 1030 298" fill="none" stroke="#bcb8a6" stroke-width="1.5" stroke-dasharray="3.200 4.400" stroke-linecap="round"/><path d="M971.600 307.700 C990 307.700 1005 309 1030 310" fill="none" stroke="#55554c" stroke-width="3.1" stroke-dasharray="3.200 4.400" stroke-linecap="round"/><path d="M971.600 307.700 C990 307.700 1005 309 1030 310" fill="none" stroke="#bcb8a6" stroke-width="1.5" stroke-dasharray="3.200 4.400" stroke-linecap="round"/><path d="M971.600 318.600 C990 318.600 1005 321 1030 322.200" fill="none" stroke="#5e5e52" stroke-width="1.400"/><path d="M788.200 369 C796 369 800 365.800 807.700 365.800" fill="none" stroke="#3a3a3a" stroke-width=".7"/><rect x="730.4" y="301.7" width="36.6" height="23.5" rx="2" fill="url(#gComp)" stroke="#3c3c3c" stroke-width=".7"/><rect x="740" y="303" width="14" height="21" fill="#b8b8b8" opacity=".5"/><path d="M744 316 l7-6" stroke="#d8a020" stroke-width="1.800"/><circle cx="744.400" cy="315.600" r="1.500" fill="#f0d040"/><circle cx="751" cy="310" r="1.500" fill="#f0d040"/><circle cx="730.4" cy="307" r="1.700" fill="#f4f4f4" stroke="#222" stroke-width=".7"/><circle cx="730.4" cy="318.6" r="1.700" fill="#f4f4f4" stroke="#222" stroke-width=".7"/><circle cx="767" cy="307" r="1.700" fill="#f4f4f4" stroke="#222" stroke-width=".7"/><circle cx="767" cy="318.6" r="1.700" fill="#f4f4f4" stroke="#222" stroke-width=".7"/><rect x="799.600" y="306" width="44.200" height="11.700" rx="1.600" fill="#1a1a1a"/><rect x="796.6" y="286.7" width="50.2" height="22.8" rx="2" fill="url(#gComp)" stroke="#3c3c3c" stroke-width=".7"/><path d="M815 303 l9-10" stroke="#222" stroke-width="1.300"/><path d="M817 297.500h5M819 295h5M815.500 300h5" stroke="#333" stroke-width=".9"/><path d="M815 304l4-1.400" stroke="#c03020" stroke-width="1.100"/><rect x="837.800" y="293.600" width="7" height="7" fill="#f4f4f4" stroke="#444" stroke-width=".5"/><path d="M839.800 295.400h3l-1.500 2v2.200" stroke="#333" stroke-width=".6" fill="none"/><circle cx="796.6" cy="292" r="1.700" fill="#f4f4f4" stroke="#222" stroke-width=".7"/><circle cx="796.6" cy="303.2" r="1.700" fill="#f4f4f4" stroke="#222" stroke-width=".7"/><circle cx="846.8" cy="297.2" r="1.700" fill="#f4f4f4" stroke="#222" stroke-width=".7"/><rect x="867.9" y="288.5" width="39.1" height="18.5" rx="2" fill="url(#gComp)" stroke="#3c3c3c" stroke-width=".7"/><path d="M881.400 292 v10.400 l9.600 -5.200z" fill="#2e2e2e"/><circle cx="867.9" cy="297.2" r="1.700" fill="#f4f4f4" stroke="#222" stroke-width=".7"/><circle cx="907" cy="297.2" r="1.700" fill="#f4f4f4" stroke="#222" stroke-width=".7"/><rect x="920" y="269.5" width="51.6" height="55.7" rx="2.4" fill="url(#gComp)" stroke="#3c3c3c" stroke-width=".7"/><path d="M937 302.600v-5" stroke="#5a3a1a" stroke-width="1.200"/><path d="M933.600 302.800h6.800" stroke="#333" stroke-width=".7"/><path d="M931.600 296.600c0-4 2.600-5.600 5.400-5.600s5.400 1.600 5.400 5.600c-2 1.600-8.800 1.600-10.800 0z" fill="#f08a18"/><path d="M934 294l3-2.400 3 2.400M937 291.600v4" stroke="#f8c870" stroke-width=".5" fill="none"/><rect x="961" y="272.1" width="7" height="7" fill="#f4f4f4" stroke="#444" stroke-width=".5"/><path d="M964.500 278.0v-4.400M962.600 275.20000000000005l1.900-1.800 1.900 1.800" stroke="#444" stroke-width=".55" fill="none"/><rect x="961" y="282.9" width="7" height="7" fill="#f4f4f4" stroke="#444" stroke-width=".5"/><path d="M964.500 288.79999999999995v-4.400M962.600 286.0l1.900-1.800 1.900 1.800" stroke="#444" stroke-width=".55" fill="none"/><rect x="961" y="293.7" width="7" height="7" fill="#f4f4f4" stroke="#444" stroke-width=".5"/><path d="M964.500 299.59999999999997v-4.400M962.600 296.8l1.900-1.800 1.900 1.800" stroke="#444" stroke-width=".55" fill="none"/><rect x="961" y="304.2" width="7" height="7" fill="#f4f4f4" stroke="#444" stroke-width=".5"/><path d="M964.500 310.09999999999997v-4.400M962.600 307.3l1.900-1.800 1.900 1.800" stroke="#444" stroke-width=".55" fill="none"/><circle cx="971.6" cy="275.6" r="1.700" fill="#f4f4f4" stroke="#222" stroke-width=".7"/><circle cx="971.6" cy="286.4" r="1.700" fill="#f4f4f4" stroke="#222" stroke-width=".7"/><circle cx="971.6" cy="297.2" r="1.700" fill="#f4f4f4" stroke="#222" stroke-width=".7"/><circle cx="971.6" cy="307.7" r="1.700" fill="#f4f4f4" stroke="#222" stroke-width=".7"/><circle cx="971.6" cy="318.6" r="1.700" fill="#f4f4f4" stroke="#222" stroke-width=".7"/><circle cx="920" cy="297.2" r="1.700" fill="#f4f4f4" stroke="#222" stroke-width=".7"/><rect x="741.600" y="363.700" width="46.600" height="10.500" rx="1.400" fill="#f4f4f4" stroke="#3c3c3c" stroke-width=".6"/><path d="M743 363.700h24v10.500h-24a1.400 1.400 0 0 1-1.400-1.400v-7.700a1.400 1.400 0 0 1 1.400-1.400z" fill="#a8a8a8" stroke="#3c3c3c" stroke-width=".6"/><circle cx="788.2" cy="369" r="1.700" fill="#f4f4f4" stroke="#222" stroke-width=".7"/><path d="M809.700 349.800h24l1.400 1.600-1.400 1.900 1.400 1.900-1.400 1.900 1.400 1.900-1.400 1.900 1.400 1.900-1.400 1.900 1.400 1.900-1.400 1.900 1.400 1.900-1.400 1.700h-24a2 2 0 0 1-2-2v-18.900a2 2 0 0 1 2-2z" fill="url(#gComp)" stroke="#3c3c3c" stroke-width=".7"/><rect x="818.600" y="353" width="13.600" height="13.600" fill="#fafafa" stroke="#444" stroke-width=".5"/><rect x="818.600" y="353" width="13.600" height="2.200" fill="#2a5ac8"/><circle cx="826.400" cy="362" r="4.200" fill="#38c838"/><circle cx="825" cy="360.600" r="1.800" fill="#b8f8b8"/><circle cx="807.7" cy="355.3" r="1.700" fill="#f4f4f4" stroke="#222" stroke-width=".7"/><circle cx="807.7" cy="365.8" r="1.700" fill="#f4f4f4" stroke="#222" stroke-width=".7"/><circle cx="1006.200" cy="522.700" r="10.600" fill="url(#gCompass)" stroke="#111" stroke-width="1.700"/><path d="M994.600 510.600l4.600 .4-3.600 3.600z" fill="#111"/><path d="M1006.200 511v2M1006.200 532.400v2M994.600 522.700h2M1015.800 522.700h2" stroke="#fff" stroke-width=".8"/><rect x="719.8000000000001" y="521.800" width="4" height="15" fill="#b8b8b8" stroke="#777" stroke-width=".4"/></g></svg>
<div class="t" style="left:733px;top:304.20px;font-size:5.6px;color:#1a1a1a;font-weight:400;letter-spacing:-0.436px;">G</div>
<div class="t" style="left:733.2px;top:315.80px;font-size:5.6px;color:#1a1a1a;font-weight:400;letter-spacing:-0.342px;">T</div>
<div class="t" style="left:756.6px;top:304.20px;font-size:5.6px;color:#1a1a1a;font-weight:400;letter-spacing:-0.436px;">G</div>
<div class="t" style="left:756.8px;top:315.80px;font-size:5.6px;color:#1a1a1a;font-weight:400;letter-spacing:-0.374px;">X</div>
<div class="t" style="left:801.2px;top:289.50px;font-size:5px;color:#1a1a1a;font-weight:400;letter-spacing:0.098px;">{0;x}</div>
<div class="t" style="left:801.2px;top:300.70px;font-size:5px;color:#1a1a1a;font-weight:400;letter-spacing:0.098px;">{1;x}</div>
<div class="t" style="left:828.6px;top:294.40px;font-size:5.6px;color:#1a1a1a;font-weight:400;letter-spacing:-0.404px;">R</div>
<div class="t" style="left:815.498828125px;top:310.60px;font-size:6px;color:#f4f4f4;font-weight:400;letter-spacing:-0.267px;">Graft</div>
<div class="t" style="left:871.4px;top:294.40px;font-size:5.6px;color:#1a1a1a;font-weight:400;letter-spacing:-0.374px;">A</div>
<div class="t" style="left:897.8px;top:294.40px;font-size:5.6px;color:#1a1a1a;font-weight:400;letter-spacing:-0.374px;">A</div>
<div class="t" style="left:923.8px;top:294.40px;font-size:5.6px;color:#1a1a1a;font-weight:400;letter-spacing:-0.404px;">D</div>
<div class="t" style="left:946px;top:273.10px;font-size:5px;color:#1a1a1a;font-weight:400;letter-spacing:0.062px;">{0;0}</div>
<div class="t" style="left:946px;top:283.90px;font-size:5px;color:#1a1a1a;font-weight:400;letter-spacing:0.062px;">{0;1}</div>
<div class="t" style="left:946px;top:294.70px;font-size:5px;color:#1a1a1a;font-weight:400;letter-spacing:0.062px;">{0;2}</div>
<div class="t" style="left:946px;top:305.20px;font-size:5px;color:#1a1a1a;font-weight:400;letter-spacing:0.062px;">{0;3}</div>
<div class="t" style="left:946px;top:316.10px;font-size:5px;color:#1a1a1a;font-weight:400;letter-spacing:-0.040px;">{1}</div>
<div class="t" style="left:745.6px;top:366.20px;font-size:5.6px;color:#1a1a1a;font-weight:400;letter-spacing:-0.144px;">Swatch</div>
<div class="t" style="left:811.6px;top:352.50px;font-size:5.6px;color:#1a1a1a;font-weight:400;letter-spacing:-0.436px;">G</div>
<div class="t" style="left:811.2px;top:363.00px;font-size:5.6px;color:#1a1a1a;font-weight:400;letter-spacing:-0.467px;">M</div>
<div class="abs" style="left:719.2px;top:537.6px;width:304.79999999999995px;height:12.399999999999977px;background:#f0f0f0;border-top:.5px solid #c8c8c8"></div>
<svg style="left:720.600px;top:540.600px" width="9" height="9" viewBox="-4.500 -4.500 9 9"><circle r="4.200" fill="#2a6ac8"/><circle r="2.600" fill="none" stroke="#e8f0ff" stroke-width=".7"/><path d="M0 -1.600v1.800l1.200 .8" stroke="#fff" stroke-width=".7" fill="none"/></svg>
<div class="t" style="left:731.6px;top:541.80px;font-size:6.8px;color:#1a1a1a;font-weight:400;letter-spacing:-0.275px;">Save successfully completed... (2 seconds ago)</div>
<div class="t" style="left:985px;top:542.00px;font-size:6.4px;color:#9a9a9a;font-weight:400;letter-spacing:-0.364px;">1.0.0007</div>
<svg style="left:1016px;top:542px" width="7" height="7" viewBox="0 0 7 7"><path d="M6 2v.1M6 4v.1M6 6v.1M4 4v.1M4 6v.1M2 6v.1" stroke="#aaa" stroke-width="1" stroke-linecap="round"/></svg>
<div class="abs" style="left:0px;top:0px;width:1024px;height:0.7px;background:#707070;"></div>

</div></body></html>
